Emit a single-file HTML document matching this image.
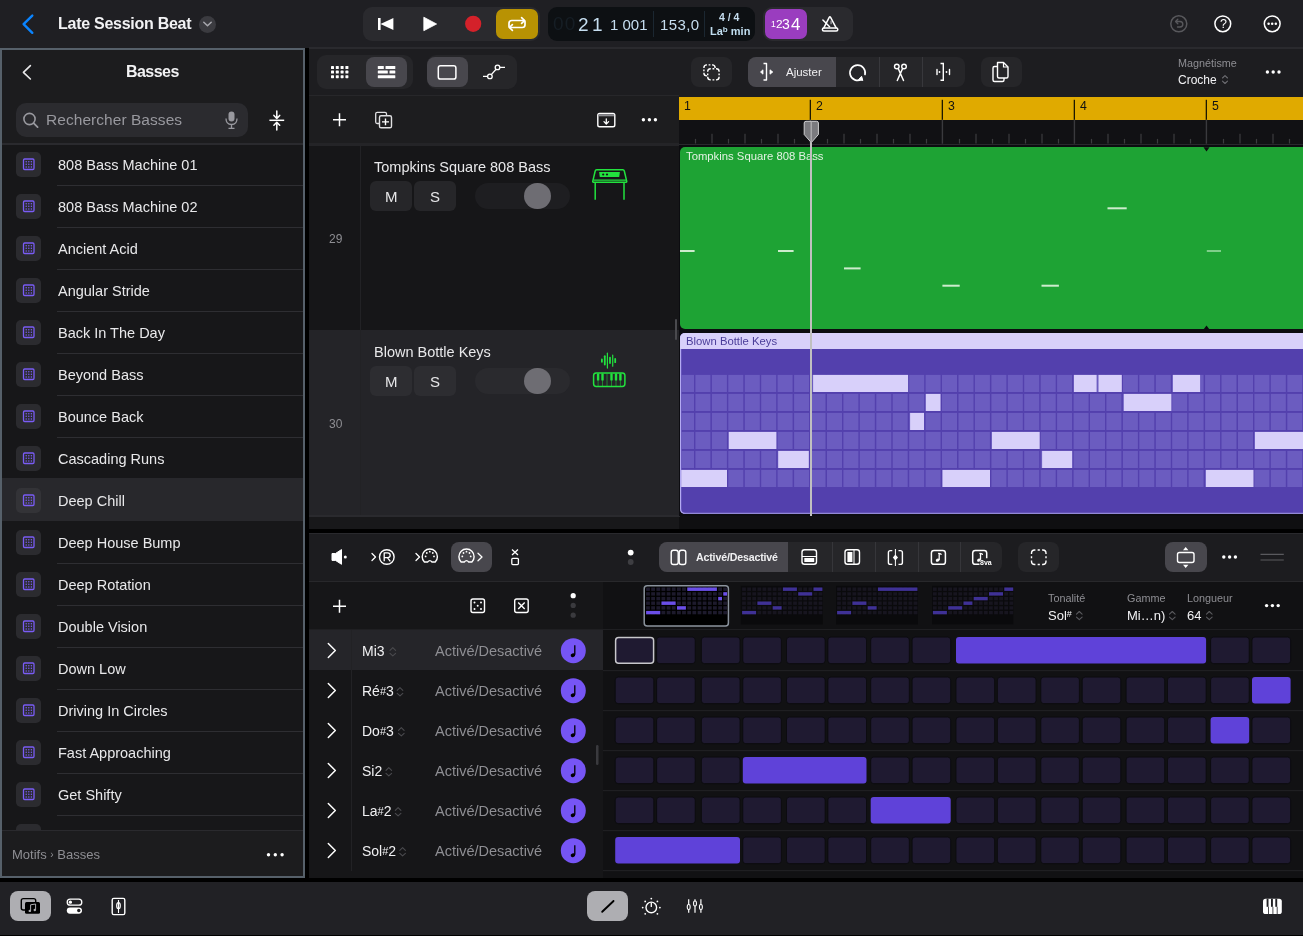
<!DOCTYPE html>
<html><head><meta charset="utf-8">
<style>
*{margin:0;padding:0;box-sizing:border-box}
html,body{width:1303px;height:936px;overflow:hidden;background:#000;font-family:"Liberation Sans",sans-serif;color:#fff}
.a{position:absolute}
svg{position:absolute;overflow:visible}
.t{position:absolute;white-space:nowrap;line-height:1;will-change:transform}
</style></head><body>
<!-- TOP BAR -->
<div class="a" style="left:0;top:0;width:1303px;height:48px;background:#1f1f23"></div>

<!-- back chevron -->
<svg style="left:0;top:0" width="60" height="48"><path d="M32.3 15.6 L23.6 24.2 L32.3 32.8" fill="none" stroke="#0a84ff" stroke-width="2.4" stroke-linecap="round" stroke-linejoin="round"/></svg>
<div class="t" style="left:58px;top:16px;font-size:16px;font-weight:700;color:#f2f2f4;letter-spacing:-0.27px">Late Session Beat</div>
<div class="a" style="left:199px;top:15.5px;width:17px;height:17px;border-radius:50%;background:#3b3b40"></div>
<svg style="left:0;top:0" width="230" height="48"><path d="M203.8 22.2 L207.5 25.8 L211.2 22.2" fill="none" stroke="#a8a8ae" stroke-width="1.5" stroke-linecap="round" stroke-linejoin="round"/></svg>
<!-- transport group -->
<div class="a" style="left:363px;top:7px;width:177px;height:34px;border-radius:9px;background:#2a2a2e"></div>
<svg style="left:0;top:0" width="560" height="48">
 <rect x="378" y="18" width="2.6" height="12" fill="#fff"/>
 <path d="M393.4 18 L393.4 30 L380.5 24 Z" fill="#fff"/>
 <path d="M423.8 17.2 L423.8 30.7 L436.6 24 Z" fill="#fff" stroke="#fff" stroke-width="0.8" stroke-linejoin="round"/>
 <circle cx="473.2" cy="23.8" r="8.1" fill="#d4212a"/>
</svg>
<div class="a" style="left:496px;top:8.5px;width:42px;height:30.5px;border-radius:7px;background:#b89203"></div>
<svg style="left:0;top:0" width="560" height="48">
 <path d="M509 26.5 V23.2 Q509 20.5 511.8 20.5 H524.5" fill="none" stroke="#fff" stroke-width="1.7" stroke-linecap="round"/>
 <path d="M521.6 17.6 L524.6 20.5 L521.6 23.4" fill="none" stroke="#fff" stroke-width="1.7" stroke-linecap="round" stroke-linejoin="round"/>
 <path d="M525 21.5 V24.8 Q525 27.5 522.2 27.5 H509.5" fill="none" stroke="#fff" stroke-width="1.7" stroke-linecap="round"/>
 <path d="M512.4 24.6 L509.4 27.5 L512.4 30.4" fill="none" stroke="#fff" stroke-width="1.7" stroke-linecap="round" stroke-linejoin="round"/>
</svg>
<!-- LCD -->
<div class="a" style="left:548px;top:7px;width:207px;height:33.5px;border-radius:9px;background:#0d1013"></div>
<div class="t" style="left:552.5px;top:14.3px;font-size:19px;color:#161e25;letter-spacing:1.2px">00</div>
<div class="t" style="left:577.5px;top:14.5px;font-size:19px;color:#c6def0">2</div>
<div class="t" style="left:592px;top:14.5px;font-size:19px;color:#c6def0">1</div>
<div class="t" style="left:610px;top:16.8px;font-size:15px;color:#c6def0">1 001</div>
<div class="a" style="left:653px;top:11px;width:1px;height:26px;background:#1b2731"></div>
<div class="t" style="left:659.5px;top:16.8px;font-size:15px;color:#c6def0;letter-spacing:0.4px">153,0</div>
<div class="a" style="left:703.8px;top:11px;width:1.2px;height:26px;background:#1b2731"></div>
<div class="t" style="left:718.5px;top:12.2px;font-size:10.5px;font-weight:700;color:#c6def0">4 / 4</div>
<div class="t" style="left:709.5px;top:25.9px;font-size:11px;font-weight:700;color:#c0def0">La<span style="font-size:8px;vertical-align:3px">b</span> min</div>
<!-- count-in group -->
<div class="a" style="left:763px;top:7px;width:90px;height:34px;border-radius:9px;background:#2a2a2e"></div>
<div class="a" style="left:765px;top:9px;width:42px;height:30px;border-radius:7px;background:#9a3dbf"></div>
<div class="t" style="left:771.3px;top:20px;font-size:8.6px;color:#fff">1</div><div class="t" style="left:775.6px;top:19.3px;font-size:11.8px;color:#fff">2</div><div class="t" style="left:782.2px;top:17px;font-size:14px;color:#fff">3</div><div class="t" style="left:790.8px;top:16.7px;font-size:16.9px;color:#fff">4</div>
<svg style="left:0;top:0" width="900" height="48">
 <path d="M823.6 28.3 L829.2 17.4 Q829.9 16.2 830.6 17.4 L836.4 28.3" fill="none" stroke="#fff" stroke-width="1.5" stroke-linejoin="round"/>
 <rect x="822.4" y="28.1" width="15.4" height="3" rx="1.5" fill="none" stroke="#fff" stroke-width="1.5"/>
 <path d="M822.9 20 L829.6 26.7" stroke="#fff" stroke-width="1.5" stroke-linecap="round"/>
 <rect x="830.4" y="20.6" width="1.4" height="3.6" fill="#9a9a9e"/>
</svg>
<!-- right icons -->
<svg style="left:0;top:0" width="1303" height="48">
 <circle cx="1178.8" cy="23.8" r="8" fill="none" stroke="#58585c" stroke-width="1.5"/>
 <path d="M1176 21.5 H1180 Q1182.8 21.5 1182.8 24.3 Q1182.8 27 1180 27 H1177.5" fill="none" stroke="#58585c" stroke-width="1.4" stroke-linecap="round"/>
 <path d="M1177.8 19.3 L1175.6 21.5 L1177.8 23.7" fill="none" stroke="#58585c" stroke-width="1.4" stroke-linecap="round" stroke-linejoin="round"/>
 <circle cx="1222.8" cy="23.8" r="7.9" fill="none" stroke="#fff" stroke-width="1.5"/>
 <circle cx="1272.2" cy="23.8" r="7.9" fill="none" stroke="#fff" stroke-width="1.5"/>
 <circle cx="1268.6" cy="23.8" r="1.25" fill="#fff"/><circle cx="1272.2" cy="23.8" r="1.25" fill="#fff"/><circle cx="1275.8" cy="23.8" r="1.25" fill="#fff"/>
</svg>
<div class="t" style="left:1219.5px;top:17.6px;font-size:12.5px;color:#fff">?</div>

<!-- LEFT PANEL -->
<div class="a" id="lp" style="left:0;top:48px;width:305px;height:830.3px;background:#1c1c1e;border:2px solid #56606a"></div>
<!-- left panel content -->
<svg style="left:0;top:0" width="305" height="100"><path d="M30.4 65.6 L23.4 72.3 L30.4 79" fill="none" stroke="#e8e8ea" stroke-width="1.6" stroke-linecap="round" stroke-linejoin="round"/></svg>
<div class="t" style="left:126.3px;top:64px;font-size:16px;font-weight:700;color:#f2f2f4;letter-spacing:-0.55px">Basses</div>
<div class="a" style="left:15.5px;top:103px;width:232.5px;height:34px;border-radius:10px;background:#2b2b2f"></div>
<svg style="left:0;top:0" width="305" height="145"><circle cx="29.5" cy="119" r="5.6" fill="none" stroke="#98989e" stroke-width="1.6"/><path d="M33.6 123.1 L37.6 127.1" stroke="#98989e" stroke-width="1.8" stroke-linecap="round"/><rect x="228.5" y="111.5" width="6" height="10" rx="3" fill="#98989e"/><path d="M226 118.5 Q226 124.5 231.5 124.5 Q237 124.5 237 118.5" fill="none" stroke="#98989e" stroke-width="1.3"/><path d="M231.5 124.5 V128 M228.5 128.3 H234.5" stroke="#98989e" stroke-width="1.3"/><path d="M269.4 120.3 H284.2" stroke="#fff" stroke-width="1.5"/><path d="M276.8 111 V118.2 M273.9 115.4 L276.8 118.4 L279.7 115.4" fill="none" stroke="#fff" stroke-width="1.5" stroke-linecap="round" stroke-linejoin="round"/><path d="M276.8 130 V122.5 M273.9 125.3 L276.8 122.3 L279.7 125.3" fill="none" stroke="#fff" stroke-width="1.5" stroke-linecap="round" stroke-linejoin="round"/></svg>
<div class="t" style="left:45.8px;top:112.4px;font-size:15.5px;color:#98989e;letter-spacing:0.05px">Rechercher Basses</div>
<div class="a" style="left:2px;top:145px;width:301px;height:685px;background:#171719"></div><div class="a" style="left:2px;top:143px;width:301px;height:2px;background:#2a2a2e"></div>
<div class="a" style="left:16px;top:152px;width:25px;height:25px;border-radius:5px;background:#2b2b2f"></div>
<div class="t" style="left:57.5px;top:157.7px;font-size:14.5px;color:#e8e8ea">808 Bass Machine 01</div>
<div class="a" style="left:57px;top:185px;width:246px;height:1px;background:#2e2e32"></div>
<div class="a" style="left:16px;top:194px;width:25px;height:25px;border-radius:5px;background:#2b2b2f"></div>
<div class="t" style="left:57.5px;top:199.7px;font-size:14.5px;color:#e8e8ea">808 Bass Machine 02</div>
<div class="a" style="left:57px;top:227px;width:246px;height:1px;background:#2e2e32"></div>
<div class="a" style="left:16px;top:236px;width:25px;height:25px;border-radius:5px;background:#2b2b2f"></div>
<div class="t" style="left:57.5px;top:241.7px;font-size:14.5px;color:#e8e8ea">Ancient Acid</div>
<div class="a" style="left:57px;top:269px;width:246px;height:1px;background:#2e2e32"></div>
<div class="a" style="left:16px;top:278px;width:25px;height:25px;border-radius:5px;background:#2b2b2f"></div>
<div class="t" style="left:57.5px;top:283.7px;font-size:14.5px;color:#e8e8ea">Angular Stride</div>
<div class="a" style="left:57px;top:311px;width:246px;height:1px;background:#2e2e32"></div>
<div class="a" style="left:16px;top:320px;width:25px;height:25px;border-radius:5px;background:#2b2b2f"></div>
<div class="t" style="left:57.5px;top:325.7px;font-size:14.5px;color:#e8e8ea">Back In The Day</div>
<div class="a" style="left:57px;top:353px;width:246px;height:1px;background:#2e2e32"></div>
<div class="a" style="left:16px;top:362px;width:25px;height:25px;border-radius:5px;background:#2b2b2f"></div>
<div class="t" style="left:57.5px;top:367.7px;font-size:14.5px;color:#e8e8ea">Beyond Bass</div>
<div class="a" style="left:57px;top:395px;width:246px;height:1px;background:#2e2e32"></div>
<div class="a" style="left:16px;top:404px;width:25px;height:25px;border-radius:5px;background:#2b2b2f"></div>
<div class="t" style="left:57.5px;top:409.7px;font-size:14.5px;color:#e8e8ea">Bounce Back</div>
<div class="a" style="left:57px;top:437px;width:246px;height:1px;background:#2e2e32"></div>
<div class="a" style="left:16px;top:446px;width:25px;height:25px;border-radius:5px;background:#2b2b2f"></div>
<div class="t" style="left:57.5px;top:451.7px;font-size:14.5px;color:#e8e8ea">Cascading Runs</div>
<div class="a" style="left:2px;top:478px;width:301px;height:43px;background:#28282c"></div>
<div class="a" style="left:16px;top:488px;width:25px;height:25px;border-radius:5px;background:#333337"></div>
<div class="t" style="left:57.5px;top:493.7px;font-size:14.5px;color:#e8e8ea">Deep Chill</div>
<div class="a" style="left:16px;top:530px;width:25px;height:25px;border-radius:5px;background:#2b2b2f"></div>
<div class="t" style="left:57.5px;top:535.7px;font-size:14.5px;color:#e8e8ea">Deep House Bump</div>
<div class="a" style="left:57px;top:563px;width:246px;height:1px;background:#2e2e32"></div>
<div class="a" style="left:16px;top:572px;width:25px;height:25px;border-radius:5px;background:#2b2b2f"></div>
<div class="t" style="left:57.5px;top:577.7px;font-size:14.5px;color:#e8e8ea">Deep Rotation</div>
<div class="a" style="left:57px;top:605px;width:246px;height:1px;background:#2e2e32"></div>
<div class="a" style="left:16px;top:614px;width:25px;height:25px;border-radius:5px;background:#2b2b2f"></div>
<div class="t" style="left:57.5px;top:619.7px;font-size:14.5px;color:#e8e8ea">Double Vision</div>
<div class="a" style="left:57px;top:647px;width:246px;height:1px;background:#2e2e32"></div>
<div class="a" style="left:16px;top:656px;width:25px;height:25px;border-radius:5px;background:#2b2b2f"></div>
<div class="t" style="left:57.5px;top:661.7px;font-size:14.5px;color:#e8e8ea">Down Low</div>
<div class="a" style="left:57px;top:689px;width:246px;height:1px;background:#2e2e32"></div>
<div class="a" style="left:16px;top:698px;width:25px;height:25px;border-radius:5px;background:#2b2b2f"></div>
<div class="t" style="left:57.5px;top:703.7px;font-size:14.5px;color:#e8e8ea">Driving In Circles</div>
<div class="a" style="left:57px;top:731px;width:246px;height:1px;background:#2e2e32"></div>
<div class="a" style="left:16px;top:740px;width:25px;height:25px;border-radius:5px;background:#2b2b2f"></div>
<div class="t" style="left:57.5px;top:745.7px;font-size:14.5px;color:#e8e8ea">Fast Approaching</div>
<div class="a" style="left:57px;top:773px;width:246px;height:1px;background:#2e2e32"></div>
<div class="a" style="left:16px;top:782px;width:25px;height:25px;border-radius:5px;background:#2b2b2f"></div>
<div class="t" style="left:57.5px;top:787.7px;font-size:14.5px;color:#e8e8ea">Get Shifty</div>
<div class="a" style="left:57px;top:815px;width:246px;height:1px;background:#2e2e32"></div>
<div class="a" style="left:16px;top:824px;width:25px;height:25px;border-radius:5px;background:#2b2b2f"></div>
<svg style="left:0;top:0" width="305" height="880">
<rect x="23.5" y="159.0" width="10.5" height="10.5" rx="1.2" fill="none" stroke="#7a5cf5" stroke-width="1.3"/><circle cx="26.2" cy="161.7" r="0.75" fill="#7a5cf5"/><circle cx="26.2" cy="164.29999999999998" r="0.75" fill="#7a5cf5"/><circle cx="26.2" cy="166.89999999999998" r="0.75" fill="#7a5cf5"/><circle cx="28.8" cy="161.7" r="0.75" fill="#7a5cf5"/><circle cx="28.8" cy="164.29999999999998" r="0.75" fill="#7a5cf5"/><circle cx="28.8" cy="166.89999999999998" r="0.75" fill="#7a5cf5"/><circle cx="31.4" cy="161.7" r="0.75" fill="#7a5cf5"/><circle cx="31.4" cy="164.29999999999998" r="0.75" fill="#7a5cf5"/><circle cx="31.4" cy="166.89999999999998" r="0.75" fill="#7a5cf5"/>
<rect x="23.5" y="201.0" width="10.5" height="10.5" rx="1.2" fill="none" stroke="#7a5cf5" stroke-width="1.3"/><circle cx="26.2" cy="203.7" r="0.75" fill="#7a5cf5"/><circle cx="26.2" cy="206.29999999999998" r="0.75" fill="#7a5cf5"/><circle cx="26.2" cy="208.89999999999998" r="0.75" fill="#7a5cf5"/><circle cx="28.8" cy="203.7" r="0.75" fill="#7a5cf5"/><circle cx="28.8" cy="206.29999999999998" r="0.75" fill="#7a5cf5"/><circle cx="28.8" cy="208.89999999999998" r="0.75" fill="#7a5cf5"/><circle cx="31.4" cy="203.7" r="0.75" fill="#7a5cf5"/><circle cx="31.4" cy="206.29999999999998" r="0.75" fill="#7a5cf5"/><circle cx="31.4" cy="208.89999999999998" r="0.75" fill="#7a5cf5"/>
<rect x="23.5" y="243.0" width="10.5" height="10.5" rx="1.2" fill="none" stroke="#7a5cf5" stroke-width="1.3"/><circle cx="26.2" cy="245.7" r="0.75" fill="#7a5cf5"/><circle cx="26.2" cy="248.29999999999998" r="0.75" fill="#7a5cf5"/><circle cx="26.2" cy="250.89999999999998" r="0.75" fill="#7a5cf5"/><circle cx="28.8" cy="245.7" r="0.75" fill="#7a5cf5"/><circle cx="28.8" cy="248.29999999999998" r="0.75" fill="#7a5cf5"/><circle cx="28.8" cy="250.89999999999998" r="0.75" fill="#7a5cf5"/><circle cx="31.4" cy="245.7" r="0.75" fill="#7a5cf5"/><circle cx="31.4" cy="248.29999999999998" r="0.75" fill="#7a5cf5"/><circle cx="31.4" cy="250.89999999999998" r="0.75" fill="#7a5cf5"/>
<rect x="23.5" y="285.0" width="10.5" height="10.5" rx="1.2" fill="none" stroke="#7a5cf5" stroke-width="1.3"/><circle cx="26.2" cy="287.7" r="0.75" fill="#7a5cf5"/><circle cx="26.2" cy="290.3" r="0.75" fill="#7a5cf5"/><circle cx="26.2" cy="292.9" r="0.75" fill="#7a5cf5"/><circle cx="28.8" cy="287.7" r="0.75" fill="#7a5cf5"/><circle cx="28.8" cy="290.3" r="0.75" fill="#7a5cf5"/><circle cx="28.8" cy="292.9" r="0.75" fill="#7a5cf5"/><circle cx="31.4" cy="287.7" r="0.75" fill="#7a5cf5"/><circle cx="31.4" cy="290.3" r="0.75" fill="#7a5cf5"/><circle cx="31.4" cy="292.9" r="0.75" fill="#7a5cf5"/>
<rect x="23.5" y="327.0" width="10.5" height="10.5" rx="1.2" fill="none" stroke="#7a5cf5" stroke-width="1.3"/><circle cx="26.2" cy="329.7" r="0.75" fill="#7a5cf5"/><circle cx="26.2" cy="332.3" r="0.75" fill="#7a5cf5"/><circle cx="26.2" cy="334.9" r="0.75" fill="#7a5cf5"/><circle cx="28.8" cy="329.7" r="0.75" fill="#7a5cf5"/><circle cx="28.8" cy="332.3" r="0.75" fill="#7a5cf5"/><circle cx="28.8" cy="334.9" r="0.75" fill="#7a5cf5"/><circle cx="31.4" cy="329.7" r="0.75" fill="#7a5cf5"/><circle cx="31.4" cy="332.3" r="0.75" fill="#7a5cf5"/><circle cx="31.4" cy="334.9" r="0.75" fill="#7a5cf5"/>
<rect x="23.5" y="369.0" width="10.5" height="10.5" rx="1.2" fill="none" stroke="#7a5cf5" stroke-width="1.3"/><circle cx="26.2" cy="371.7" r="0.75" fill="#7a5cf5"/><circle cx="26.2" cy="374.3" r="0.75" fill="#7a5cf5"/><circle cx="26.2" cy="376.9" r="0.75" fill="#7a5cf5"/><circle cx="28.8" cy="371.7" r="0.75" fill="#7a5cf5"/><circle cx="28.8" cy="374.3" r="0.75" fill="#7a5cf5"/><circle cx="28.8" cy="376.9" r="0.75" fill="#7a5cf5"/><circle cx="31.4" cy="371.7" r="0.75" fill="#7a5cf5"/><circle cx="31.4" cy="374.3" r="0.75" fill="#7a5cf5"/><circle cx="31.4" cy="376.9" r="0.75" fill="#7a5cf5"/>
<rect x="23.5" y="411.0" width="10.5" height="10.5" rx="1.2" fill="none" stroke="#7a5cf5" stroke-width="1.3"/><circle cx="26.2" cy="413.7" r="0.75" fill="#7a5cf5"/><circle cx="26.2" cy="416.3" r="0.75" fill="#7a5cf5"/><circle cx="26.2" cy="418.9" r="0.75" fill="#7a5cf5"/><circle cx="28.8" cy="413.7" r="0.75" fill="#7a5cf5"/><circle cx="28.8" cy="416.3" r="0.75" fill="#7a5cf5"/><circle cx="28.8" cy="418.9" r="0.75" fill="#7a5cf5"/><circle cx="31.4" cy="413.7" r="0.75" fill="#7a5cf5"/><circle cx="31.4" cy="416.3" r="0.75" fill="#7a5cf5"/><circle cx="31.4" cy="418.9" r="0.75" fill="#7a5cf5"/>
<rect x="23.5" y="453.0" width="10.5" height="10.5" rx="1.2" fill="none" stroke="#7a5cf5" stroke-width="1.3"/><circle cx="26.2" cy="455.7" r="0.75" fill="#7a5cf5"/><circle cx="26.2" cy="458.3" r="0.75" fill="#7a5cf5"/><circle cx="26.2" cy="460.9" r="0.75" fill="#7a5cf5"/><circle cx="28.8" cy="455.7" r="0.75" fill="#7a5cf5"/><circle cx="28.8" cy="458.3" r="0.75" fill="#7a5cf5"/><circle cx="28.8" cy="460.9" r="0.75" fill="#7a5cf5"/><circle cx="31.4" cy="455.7" r="0.75" fill="#7a5cf5"/><circle cx="31.4" cy="458.3" r="0.75" fill="#7a5cf5"/><circle cx="31.4" cy="460.9" r="0.75" fill="#7a5cf5"/>
<rect x="23.5" y="495.0" width="10.5" height="10.5" rx="1.2" fill="none" stroke="#7a5cf5" stroke-width="1.3"/><circle cx="26.2" cy="497.7" r="0.75" fill="#7a5cf5"/><circle cx="26.2" cy="500.3" r="0.75" fill="#7a5cf5"/><circle cx="26.2" cy="502.9" r="0.75" fill="#7a5cf5"/><circle cx="28.8" cy="497.7" r="0.75" fill="#7a5cf5"/><circle cx="28.8" cy="500.3" r="0.75" fill="#7a5cf5"/><circle cx="28.8" cy="502.9" r="0.75" fill="#7a5cf5"/><circle cx="31.4" cy="497.7" r="0.75" fill="#7a5cf5"/><circle cx="31.4" cy="500.3" r="0.75" fill="#7a5cf5"/><circle cx="31.4" cy="502.9" r="0.75" fill="#7a5cf5"/>
<rect x="23.5" y="537.0" width="10.5" height="10.5" rx="1.2" fill="none" stroke="#7a5cf5" stroke-width="1.3"/><circle cx="26.2" cy="539.7" r="0.75" fill="#7a5cf5"/><circle cx="26.2" cy="542.3000000000001" r="0.75" fill="#7a5cf5"/><circle cx="26.2" cy="544.9000000000001" r="0.75" fill="#7a5cf5"/><circle cx="28.8" cy="539.7" r="0.75" fill="#7a5cf5"/><circle cx="28.8" cy="542.3000000000001" r="0.75" fill="#7a5cf5"/><circle cx="28.8" cy="544.9000000000001" r="0.75" fill="#7a5cf5"/><circle cx="31.4" cy="539.7" r="0.75" fill="#7a5cf5"/><circle cx="31.4" cy="542.3000000000001" r="0.75" fill="#7a5cf5"/><circle cx="31.4" cy="544.9000000000001" r="0.75" fill="#7a5cf5"/>
<rect x="23.5" y="579.0" width="10.5" height="10.5" rx="1.2" fill="none" stroke="#7a5cf5" stroke-width="1.3"/><circle cx="26.2" cy="581.7" r="0.75" fill="#7a5cf5"/><circle cx="26.2" cy="584.3000000000001" r="0.75" fill="#7a5cf5"/><circle cx="26.2" cy="586.9000000000001" r="0.75" fill="#7a5cf5"/><circle cx="28.8" cy="581.7" r="0.75" fill="#7a5cf5"/><circle cx="28.8" cy="584.3000000000001" r="0.75" fill="#7a5cf5"/><circle cx="28.8" cy="586.9000000000001" r="0.75" fill="#7a5cf5"/><circle cx="31.4" cy="581.7" r="0.75" fill="#7a5cf5"/><circle cx="31.4" cy="584.3000000000001" r="0.75" fill="#7a5cf5"/><circle cx="31.4" cy="586.9000000000001" r="0.75" fill="#7a5cf5"/>
<rect x="23.5" y="621.0" width="10.5" height="10.5" rx="1.2" fill="none" stroke="#7a5cf5" stroke-width="1.3"/><circle cx="26.2" cy="623.7" r="0.75" fill="#7a5cf5"/><circle cx="26.2" cy="626.3000000000001" r="0.75" fill="#7a5cf5"/><circle cx="26.2" cy="628.9000000000001" r="0.75" fill="#7a5cf5"/><circle cx="28.8" cy="623.7" r="0.75" fill="#7a5cf5"/><circle cx="28.8" cy="626.3000000000001" r="0.75" fill="#7a5cf5"/><circle cx="28.8" cy="628.9000000000001" r="0.75" fill="#7a5cf5"/><circle cx="31.4" cy="623.7" r="0.75" fill="#7a5cf5"/><circle cx="31.4" cy="626.3000000000001" r="0.75" fill="#7a5cf5"/><circle cx="31.4" cy="628.9000000000001" r="0.75" fill="#7a5cf5"/>
<rect x="23.5" y="663.0" width="10.5" height="10.5" rx="1.2" fill="none" stroke="#7a5cf5" stroke-width="1.3"/><circle cx="26.2" cy="665.7" r="0.75" fill="#7a5cf5"/><circle cx="26.2" cy="668.3000000000001" r="0.75" fill="#7a5cf5"/><circle cx="26.2" cy="670.9000000000001" r="0.75" fill="#7a5cf5"/><circle cx="28.8" cy="665.7" r="0.75" fill="#7a5cf5"/><circle cx="28.8" cy="668.3000000000001" r="0.75" fill="#7a5cf5"/><circle cx="28.8" cy="670.9000000000001" r="0.75" fill="#7a5cf5"/><circle cx="31.4" cy="665.7" r="0.75" fill="#7a5cf5"/><circle cx="31.4" cy="668.3000000000001" r="0.75" fill="#7a5cf5"/><circle cx="31.4" cy="670.9000000000001" r="0.75" fill="#7a5cf5"/>
<rect x="23.5" y="705.0" width="10.5" height="10.5" rx="1.2" fill="none" stroke="#7a5cf5" stroke-width="1.3"/><circle cx="26.2" cy="707.7" r="0.75" fill="#7a5cf5"/><circle cx="26.2" cy="710.3000000000001" r="0.75" fill="#7a5cf5"/><circle cx="26.2" cy="712.9000000000001" r="0.75" fill="#7a5cf5"/><circle cx="28.8" cy="707.7" r="0.75" fill="#7a5cf5"/><circle cx="28.8" cy="710.3000000000001" r="0.75" fill="#7a5cf5"/><circle cx="28.8" cy="712.9000000000001" r="0.75" fill="#7a5cf5"/><circle cx="31.4" cy="707.7" r="0.75" fill="#7a5cf5"/><circle cx="31.4" cy="710.3000000000001" r="0.75" fill="#7a5cf5"/><circle cx="31.4" cy="712.9000000000001" r="0.75" fill="#7a5cf5"/>
<rect x="23.5" y="747.0" width="10.5" height="10.5" rx="1.2" fill="none" stroke="#7a5cf5" stroke-width="1.3"/><circle cx="26.2" cy="749.7" r="0.75" fill="#7a5cf5"/><circle cx="26.2" cy="752.3000000000001" r="0.75" fill="#7a5cf5"/><circle cx="26.2" cy="754.9000000000001" r="0.75" fill="#7a5cf5"/><circle cx="28.8" cy="749.7" r="0.75" fill="#7a5cf5"/><circle cx="28.8" cy="752.3000000000001" r="0.75" fill="#7a5cf5"/><circle cx="28.8" cy="754.9000000000001" r="0.75" fill="#7a5cf5"/><circle cx="31.4" cy="749.7" r="0.75" fill="#7a5cf5"/><circle cx="31.4" cy="752.3000000000001" r="0.75" fill="#7a5cf5"/><circle cx="31.4" cy="754.9000000000001" r="0.75" fill="#7a5cf5"/>
<rect x="23.5" y="789.0" width="10.5" height="10.5" rx="1.2" fill="none" stroke="#7a5cf5" stroke-width="1.3"/><circle cx="26.2" cy="791.7" r="0.75" fill="#7a5cf5"/><circle cx="26.2" cy="794.3000000000001" r="0.75" fill="#7a5cf5"/><circle cx="26.2" cy="796.9000000000001" r="0.75" fill="#7a5cf5"/><circle cx="28.8" cy="791.7" r="0.75" fill="#7a5cf5"/><circle cx="28.8" cy="794.3000000000001" r="0.75" fill="#7a5cf5"/><circle cx="28.8" cy="796.9000000000001" r="0.75" fill="#7a5cf5"/><circle cx="31.4" cy="791.7" r="0.75" fill="#7a5cf5"/><circle cx="31.4" cy="794.3000000000001" r="0.75" fill="#7a5cf5"/><circle cx="31.4" cy="796.9000000000001" r="0.75" fill="#7a5cf5"/>
<rect x="23.5" y="831.0" width="10.5" height="10.5" rx="1.2" fill="none" stroke="#7a5cf5" stroke-width="1.3"/><circle cx="26.2" cy="833.7" r="0.75" fill="#7a5cf5"/><circle cx="26.2" cy="836.3000000000001" r="0.75" fill="#7a5cf5"/><circle cx="26.2" cy="838.9000000000001" r="0.75" fill="#7a5cf5"/><circle cx="28.8" cy="833.7" r="0.75" fill="#7a5cf5"/><circle cx="28.8" cy="836.3000000000001" r="0.75" fill="#7a5cf5"/><circle cx="28.8" cy="838.9000000000001" r="0.75" fill="#7a5cf5"/><circle cx="31.4" cy="833.7" r="0.75" fill="#7a5cf5"/><circle cx="31.4" cy="836.3000000000001" r="0.75" fill="#7a5cf5"/><circle cx="31.4" cy="838.9000000000001" r="0.75" fill="#7a5cf5"/>
</svg>
<div class="a" style="left:23.5px;top:829.6px;width:10.5px;height:1.4px;background:#7a5cf5"></div><div class="a" style="left:2px;top:830px;width:301px;height:46px;background:#1c1c1e;border-top:1px solid #2a2a2e"></div>
<div class="t" style="left:12px;top:848px;font-size:13px;color:#8e8e93">Motifs <span style="font-size:10px;vertical-align:1px">&#8250;</span> Basses</div>
<svg style="left:0;top:0" width="305" height="880"><circle cx="268.5" cy="854.7" r="1.7" fill="#fff"/><circle cx="275.3" cy="854.7" r="1.7" fill="#fff"/><circle cx="282.1" cy="854.7" r="1.7" fill="#fff"/></svg>
<!-- TRACKS AREA -->
<div class="a" style="left:309px;top:48px;width:994px;height:481px;background:#1d1d20"></div>
<!-- tracks toolbar -->
<div class="a" style="left:309px;top:47.2px;width:994px;height:1.6px;background:#2a2a2e"></div>
<div class="a" style="left:317px;top:55px;width:96px;height:34px;border-radius:9px;background:#262629"></div>
<div class="a" style="left:365.5px;top:57px;width:41.5px;height:30px;border-radius:8px;background:#48474d"></div>
<div class="a" style="left:426.5px;top:55px;width:90.5px;height:34px;border-radius:9px;background:#262629"></div>
<div class="a" style="left:427px;top:57px;width:41px;height:30px;border-radius:8px;background:#48474d"></div>
<svg style="left:0;top:0" width="1303" height="100">
<rect x="331.0" y="66.0" width="3" height="3" rx="0.6" fill="#fff"/>
<rect x="331.0" y="70.6" width="3" height="3" rx="0.6" fill="#fff"/>
<rect x="331.0" y="75.2" width="3" height="3" rx="0.6" fill="#fff"/>
<rect x="335.8" y="66.0" width="3" height="3" rx="0.6" fill="#fff"/>
<rect x="335.8" y="70.6" width="3" height="3" rx="0.6" fill="#fff"/>
<rect x="335.8" y="75.2" width="3" height="3" rx="0.6" fill="#fff"/>
<rect x="340.6" y="66.0" width="3" height="3" rx="0.6" fill="#fff"/>
<rect x="340.6" y="70.6" width="3" height="3" rx="0.6" fill="#fff"/>
<rect x="340.6" y="75.2" width="3" height="3" rx="0.6" fill="#fff"/>
<rect x="345.4" y="66.0" width="3" height="3" rx="0.6" fill="#fff"/>
<rect x="345.4" y="70.6" width="3" height="3" rx="0.6" fill="#fff"/>
<rect x="345.4" y="75.2" width="3" height="3" rx="0.6" fill="#fff"/>
<rect x="377.8" y="66" width="6" height="3" rx="0.5" fill="#fff"/><rect x="385.5" y="66" width="9.8" height="3" rx="0.5" fill="#fff"/>
<rect x="377.8" y="70.6" width="10" height="3" rx="0.5" fill="#fff"/><rect x="389.5" y="70.6" width="5.8" height="3" rx="0.5" fill="#fff"/>
<rect x="377.8" y="75.2" width="17.5" height="3" rx="0.5" fill="#fff"/>
<rect x="438.3" y="65.7" width="17.6" height="13.4" rx="2.2" fill="none" stroke="#fff" stroke-width="1.5"/>
<path d="M483 76.4 H487.6 M499.8 67.4 H505" stroke="#fff" stroke-width="1.3"/><path d="M491.3 74.6 L496.1 69.2" stroke="#fff" stroke-width="1.3"/><circle cx="489.9" cy="76.4" r="2.3" fill="none" stroke="#fff" stroke-width="1.3"/><circle cx="497.5" cy="67.4" r="2.3" fill="none" stroke="#fff" stroke-width="1.3"/>
</svg>
<div class="a" style="left:691px;top:57px;width:41px;height:30px;border-radius:8px;background:#262629"></div>
<div class="a" style="left:748px;top:57px;width:216.5px;height:30px;border-radius:8px;background:#262629"></div>
<div class="a" style="left:748px;top:57px;width:87.5px;height:30px;border-radius:8px 0 0 8px;background:#48474d"></div>
<div class="a" style="left:878.5px;top:57px;width:1px;height:30px;background:#38383c"></div>
<div class="a" style="left:922px;top:57px;width:1px;height:30px;background:#38383c"></div>
<div class="a" style="left:980.5px;top:57px;width:41px;height:30px;border-radius:8px;background:#262629"></div>
<div class="t" style="left:786px;top:66.5px;font-size:11.5px;color:#f0f0f2">Ajuster</div>
<svg style="left:0;top:0" width="1303" height="100">
<path d="M703.9 68.0 V67.7 A2.8 2.8 0 0 1 706.6999999999999 64.9 H706.9999999999999 M712.0000000000001 64.9 H712.3000000000001 A2.8 2.8 0 0 1 715.1 67.7 V68.0 M715.1 72.80000000000001 V73.10000000000001 A2.8 2.8 0 0 1 712.3000000000001 75.9 H712.0000000000001 M706.9999999999999 75.9 H706.6999999999999 A2.8 2.8 0 0 1 703.9 73.10000000000001 V72.80000000000001 M708.6 64.9 H710.4 M708.6 75.9 H710.4 M703.9 69.5 V71.30000000000001 M715.1 69.5 V71.30000000000001" fill="none" stroke="#fff" stroke-width="1.4"/><rect x="707.7" y="68.7" width="11.399999999999977" height="11.200000000000003" rx="2.8" fill="#262629"/><path d="M707.7 71.8 V71.5 A2.8 2.8 0 0 1 710.5 68.7 H710.8 M716.0000000000001 68.7 H716.3000000000001 A2.8 2.8 0 0 1 719.1 71.5 V71.8 M719.1 76.80000000000001 V77.10000000000001 A2.8 2.8 0 0 1 716.3000000000001 79.9 H716.0000000000001 M710.8 79.9 H710.5 A2.8 2.8 0 0 1 707.7 77.10000000000001 V76.80000000000001 M712.5000000000001 68.7 H714.3000000000001 M712.5000000000001 79.9 H714.3000000000001 M707.7 73.4 V75.20000000000002 M719.1 73.4 V75.20000000000002" fill="none" stroke="#fff" stroke-width="1.4"/>
<path d="M763.5 63.5 H766.5 V80 H763.5" fill="none" stroke="#fff" stroke-width="1.4" stroke-linejoin="round"/><path d="M763 69.8 L760.5 72 L763 74.2 Z M770 69.8 L772.8 72 L770 74.2 Z" fill="#fff" stroke="#fff" stroke-width="0.8"/>
<path d="M861.5 79.3 A7.6 7.6 0 1 1 865 74.5" fill="none" stroke="#fff" stroke-width="1.7" stroke-linecap="round"/><path d="M858.5 79.5 L862.8 80.5 L861.6 76.3 Z" fill="#fff" stroke="#fff" stroke-width="1"/>
<circle cx="896.8" cy="66.5" r="2.3" fill="none" stroke="#fff" stroke-width="1.4"/><circle cx="904" cy="66.5" r="2.3" fill="none" stroke="#fff" stroke-width="1.4"/><path d="M898.2 68.5 L903.5 80.5 M902.6 68.5 L897.3 80.5" stroke="#fff" stroke-width="1.5" stroke-linecap="round"/>
<path d="M940.5 63.5 H943.3 V80.3 H940.5" fill="none" stroke="#fff" stroke-width="1.4"/><path d="M937 69.5 V74.5 M949.5 69.5 V74.5" stroke="#fff" stroke-width="1.4" stroke-linecap="round"/><circle cx="939.5" cy="72" r="0.9" fill="#fff"/><circle cx="946.5" cy="72" r="0.9" fill="#fff"/>
<path d="M997 66.5 H994.5 Q993 66.5 993 68 V80 Q993 81.5 994.5 81.5 H1002.5 Q1004 81.5 1004 80 V78" fill="none" stroke="#fff" stroke-width="1.4"/><path d="M997.5 62.5 H1003.5 L1008 67 V76.5 Q1008 78 1006.5 78 H999 Q997.5 78 997.5 76.5 Z" fill="none" stroke="#fff" stroke-width="1.4" stroke-linejoin="round"/><path d="M1003.5 62.5 V67 H1008" fill="none" stroke="#fff" stroke-width="1.2"/>
<circle cx="1267.4" cy="72" r="1.7" fill="#fff"/><circle cx="1273.2" cy="72" r="1.7" fill="#fff"/><circle cx="1279" cy="72" r="1.7" fill="#fff"/>
<path d="M1222.5 78 L1225 75.7 L1227.5 78 M1222.5 81.2 L1225 83.5 L1227.5 81.2" fill="none" stroke="#6e6e73" stroke-width="1.1" stroke-linecap="round" stroke-linejoin="round"/>
</svg>
<div class="t" style="left:1177.5px;top:58.3px;font-size:10.8px;color:#8e8e93">Magnétisme</div>
<div class="t" style="left:1177.5px;top:73.6px;font-size:12px;color:#f2f2f4">Croche</div>
<div class="a" style="left:309px;top:96px;width:370px;height:47px;background:#1d1d1f"></div><div class="a" style="left:309px;top:95px;width:370px;height:1.3px;background:#27272a"></div>
<div class="a" style="left:309px;top:143px;width:370px;height:3px;background:#242427"></div>
<svg style="left:0;top:0" width="700" height="150">
<path d="M333 119.7 H346 M339.5 113.2 V126.2" stroke="#fff" stroke-width="1.5"/>
<path d="M379.5 123.5 H377.2 Q375.7 123.5 375.7 122 V113.8 Q375.7 112.3 377.2 112.3 H385 Q386.5 112.3 386.5 113.8 V115.8" fill="none" stroke="#e0e0e2" stroke-width="1.3"/><rect x="379.5" y="115.8" width="12" height="12" rx="1.6" fill="#1d1d1f" stroke="#e0e0e2" stroke-width="1.4"/><path d="M385.5 118.5 V125.3 M382 121.9 H389" stroke="#fff" stroke-width="1.4"/>
<rect x="597.8" y="113.5" width="17" height="13.3" rx="1.8" fill="none" stroke="#fff" stroke-width="1.4"/><rect x="598.5" y="114.3" width="15.6" height="2" fill="#8e8e93"/><path d="M606.3 118.8 V123.8 M604 121.6 L606.3 124 L608.6 121.6" fill="none" stroke="#fff" stroke-width="1.3" stroke-linecap="round" stroke-linejoin="round"/>
<circle cx="643.4" cy="119.7" r="1.7" fill="#fff"/><circle cx="649.4" cy="119.7" r="1.7" fill="#fff"/><circle cx="655.4" cy="119.7" r="1.7" fill="#fff"/>
</svg>
<div class="a" style="left:309px;top:146px;width:370px;height:184px;background:#161618"></div>
<div class="a" style="left:309px;top:330px;width:370px;height:186px;background:#242428"></div>
<div class="a" style="left:360px;top:146px;width:1px;height:370px;background:#222225"></div>
<div class="a" style="left:309px;top:515.3px;width:994px;height:14px;background:#18181a"></div><div class="a" style="left:679px;top:515.3px;width:624px;height:14px;background:#0f0f11"></div><div class="a" style="left:309px;top:515.3px;width:371px;height:1.6px;background:#2a2a2e"></div>
<div class="a" style="left:679px;top:143px;width:624px;height:373px;background:#0c0c10"></div>
<div class="a" style="left:674.5px;top:319px;width:2.7px;height:21px;border-radius:1.5px;background:#4a4a4e"></div>
<!-- ruler -->
<div class="a" style="left:679px;top:96.8px;width:624px;height:23px;background:#e0aa00"></div>
<div class="a" style="left:679px;top:119.7px;width:624px;height:24px;background:#111114"></div>
<div class="a" style="left:679px;top:143.5px;width:624px;height:1px;background:#29292d"></div>
<svg style="left:0;top:0" width="1303" height="520">
<rect x="694.9" y="138.9" width="1.2" height="4.6" fill="#3c3c40"/>
<rect x="711.4" y="133.8" width="1.2" height="9.7" fill="#3c3c40"/>
<rect x="727.9" y="138.9" width="1.2" height="4.6" fill="#3c3c40"/>
<rect x="744.4" y="133.8" width="1.2" height="9.7" fill="#3c3c40"/>
<rect x="760.9" y="138.9" width="1.2" height="4.6" fill="#3c3c40"/>
<rect x="777.4" y="133.8" width="1.2" height="9.7" fill="#3c3c40"/>
<rect x="793.9" y="138.9" width="1.2" height="4.6" fill="#3c3c40"/>
<rect x="826.9" y="138.9" width="1.2" height="4.6" fill="#3c3c40"/>
<rect x="843.4" y="133.8" width="1.2" height="9.7" fill="#3c3c40"/>
<rect x="859.9" y="138.9" width="1.2" height="4.6" fill="#3c3c40"/>
<rect x="876.4" y="133.8" width="1.2" height="9.7" fill="#3c3c40"/>
<rect x="892.9" y="138.9" width="1.2" height="4.6" fill="#3c3c40"/>
<rect x="909.4" y="133.8" width="1.2" height="9.7" fill="#3c3c40"/>
<rect x="925.9" y="138.9" width="1.2" height="4.6" fill="#3c3c40"/>
<rect x="809.7" y="99.8" width="1.3" height="20" fill="#1c1800"/>
<rect x="809.7" y="119.7" width="1.4" height="24" fill="#3a3a3e"/>
<rect x="958.9" y="138.9" width="1.2" height="4.6" fill="#3c3c40"/>
<rect x="975.4" y="133.8" width="1.2" height="9.7" fill="#3c3c40"/>
<rect x="991.9" y="138.9" width="1.2" height="4.6" fill="#3c3c40"/>
<rect x="1008.4" y="133.8" width="1.2" height="9.7" fill="#3c3c40"/>
<rect x="1024.9" y="138.9" width="1.2" height="4.6" fill="#3c3c40"/>
<rect x="1041.4" y="133.8" width="1.2" height="9.7" fill="#3c3c40"/>
<rect x="1057.9" y="138.9" width="1.2" height="4.6" fill="#3c3c40"/>
<rect x="941.7" y="99.8" width="1.3" height="20" fill="#1c1800"/>
<rect x="941.7" y="119.7" width="1.4" height="24" fill="#3a3a3e"/>
<rect x="1090.9" y="138.9" width="1.2" height="4.6" fill="#3c3c40"/>
<rect x="1107.4" y="133.8" width="1.2" height="9.7" fill="#3c3c40"/>
<rect x="1123.9" y="138.9" width="1.2" height="4.6" fill="#3c3c40"/>
<rect x="1140.4" y="133.8" width="1.2" height="9.7" fill="#3c3c40"/>
<rect x="1156.9" y="138.9" width="1.2" height="4.6" fill="#3c3c40"/>
<rect x="1173.4" y="133.8" width="1.2" height="9.7" fill="#3c3c40"/>
<rect x="1189.9" y="138.9" width="1.2" height="4.6" fill="#3c3c40"/>
<rect x="1073.7" y="99.8" width="1.3" height="20" fill="#1c1800"/>
<rect x="1073.7" y="119.7" width="1.4" height="24" fill="#3a3a3e"/>
<rect x="1222.9" y="138.9" width="1.2" height="4.6" fill="#3c3c40"/>
<rect x="1239.4" y="133.8" width="1.2" height="9.7" fill="#3c3c40"/>
<rect x="1255.9" y="138.9" width="1.2" height="4.6" fill="#3c3c40"/>
<rect x="1272.4" y="133.8" width="1.2" height="9.7" fill="#3c3c40"/>
<rect x="1288.9" y="138.9" width="1.2" height="4.6" fill="#3c3c40"/>
<rect x="1205.7" y="99.8" width="1.3" height="20" fill="#1c1800"/>
<rect x="1205.7" y="119.7" width="1.4" height="24" fill="#3a3a3e"/>
</svg>
<div class="t" style="left:684.2px;top:99.5px;font-size:12.3px;color:#111">1</div>
<div class="t" style="left:816.3px;top:99.5px;font-size:12.3px;color:#111">2</div>
<div class="t" style="left:948.3px;top:99.5px;font-size:12.3px;color:#111">3</div>
<div class="t" style="left:1080.3px;top:99.5px;font-size:12.3px;color:#111">4</div>
<div class="t" style="left:1212.3px;top:99.5px;font-size:12.3px;color:#111">5</div>
<div class="a" style="left:680px;top:147.2px;width:640px;height:182.3px;border-radius:5px;background:#1ea334"></div>
<div class="t" style="left:685.5px;top:151.2px;font-size:11.3px;color:#e2f2e2">Tompkins Square 808 Bass</div>
<svg style="left:0;top:0" width="1303" height="520">
<rect x="680" y="250" width="14.6" height="2" fill="#cdeccd"/>
<rect x="778" y="250" width="15.6" height="2" fill="#cdeccd"/>
<rect x="844" y="267.4" width="16.6" height="2" fill="#cdeccd"/>
<rect x="942.4" y="284.7" width="17.3" height="2" fill="#cdeccd"/>
<rect x="1041.5" y="284.7" width="17.4" height="2" fill="#cdeccd"/>
<rect x="1107.5" y="207.3" width="19.2" height="2" fill="#cdeccd"/>
<rect x="1206.8" y="250" width="14.2" height="2" fill="#7fcf8a"/>
<path d="M1203.5 147.2 L1206.5 151.5 L1209.5 147.2 Z" fill="#0c0c10"/><path d="M1203.5 329.5 L1206.5 325.5 L1209.5 329.5 Z" fill="#0c0c10"/>
</svg>
<div class="a" style="left:680px;top:332.6px;width:640px;height:181.5px;border-radius:5px;background:#5340ad;overflow:hidden;box-shadow:inset 1.2px 0 0 #b4aaf2, inset 0 -1.2px 0 #9288d6"><div class="a" style="left:0;top:0;width:640px;height:16.4px;background:#d8d0fa"></div></div>
<div class="t" style="left:685.5px;top:335.5px;font-size:11.3px;color:#4a3d99">Blown Bottle Keys</div>
<svg style="left:0;top:0" width="1303" height="520">
<rect x="681.2" y="374.9" width="12.8" height="17.1" fill="#6b5cc0"/><rect x="695.4" y="374.9" width="15.0" height="17.1" fill="#6b5cc0"/><rect x="711.9" y="374.9" width="15.0" height="17.1" fill="#6b5cc0"/><rect x="728.3" y="374.9" width="15.0" height="17.1" fill="#6b5cc0"/><rect x="744.8" y="374.9" width="15.0" height="17.1" fill="#6b5cc0"/><rect x="761.2" y="374.9" width="15.0" height="17.1" fill="#6b5cc0"/><rect x="777.6" y="374.9" width="15.0" height="17.1" fill="#6b5cc0"/><rect x="794.1" y="374.9" width="15.0" height="17.1" fill="#6b5cc0"/><rect x="810.5" y="374.9" width="15.0" height="17.1" fill="#6b5cc0"/><rect x="827.0" y="374.9" width="15.0" height="17.1" fill="#6b5cc0"/><rect x="843.4" y="374.9" width="15.0" height="17.1" fill="#6b5cc0"/><rect x="859.8" y="374.9" width="15.0" height="17.1" fill="#6b5cc0"/><rect x="876.3" y="374.9" width="15.0" height="17.1" fill="#6b5cc0"/><rect x="892.7" y="374.9" width="15.0" height="17.1" fill="#6b5cc0"/><rect x="909.2" y="374.9" width="15.0" height="17.1" fill="#6b5cc0"/><rect x="925.6" y="374.9" width="15.0" height="17.1" fill="#6b5cc0"/><rect x="942.0" y="374.9" width="15.0" height="17.1" fill="#6b5cc0"/><rect x="958.5" y="374.9" width="15.0" height="17.1" fill="#6b5cc0"/><rect x="974.9" y="374.9" width="15.0" height="17.1" fill="#6b5cc0"/><rect x="991.4" y="374.9" width="15.0" height="17.1" fill="#6b5cc0"/><rect x="1007.8" y="374.9" width="15.0" height="17.1" fill="#6b5cc0"/><rect x="1024.2" y="374.9" width="15.0" height="17.1" fill="#6b5cc0"/><rect x="1040.7" y="374.9" width="15.0" height="17.1" fill="#6b5cc0"/><rect x="1057.1" y="374.9" width="15.0" height="17.1" fill="#6b5cc0"/><rect x="1073.6" y="374.9" width="15.0" height="17.1" fill="#6b5cc0"/><rect x="1090.0" y="374.9" width="15.0" height="17.1" fill="#6b5cc0"/><rect x="1106.4" y="374.9" width="15.0" height="17.1" fill="#6b5cc0"/><rect x="1122.9" y="374.9" width="15.0" height="17.1" fill="#6b5cc0"/><rect x="1139.3" y="374.9" width="15.0" height="17.1" fill="#6b5cc0"/><rect x="1155.8" y="374.9" width="15.0" height="17.1" fill="#6b5cc0"/><rect x="1172.2" y="374.9" width="15.0" height="17.1" fill="#6b5cc0"/><rect x="1188.6" y="374.9" width="15.0" height="17.1" fill="#6b5cc0"/><rect x="1205.1" y="374.9" width="15.0" height="17.1" fill="#6b5cc0"/><rect x="1221.5" y="374.9" width="15.0" height="17.1" fill="#6b5cc0"/><rect x="1238.0" y="374.9" width="15.0" height="17.1" fill="#6b5cc0"/><rect x="1254.4" y="374.9" width="15.0" height="17.1" fill="#6b5cc0"/><rect x="1270.8" y="374.9" width="15.0" height="17.1" fill="#6b5cc0"/><rect x="1287.3" y="374.9" width="15.0" height="17.1" fill="#6b5cc0"/><rect x="681.2" y="393.9" width="12.8" height="17.1" fill="#6b5cc0"/><rect x="695.4" y="393.9" width="15.0" height="17.1" fill="#6b5cc0"/><rect x="711.9" y="393.9" width="15.0" height="17.1" fill="#6b5cc0"/><rect x="728.3" y="393.9" width="15.0" height="17.1" fill="#6b5cc0"/><rect x="744.8" y="393.9" width="15.0" height="17.1" fill="#6b5cc0"/><rect x="761.2" y="393.9" width="15.0" height="17.1" fill="#6b5cc0"/><rect x="777.6" y="393.9" width="15.0" height="17.1" fill="#6b5cc0"/><rect x="794.1" y="393.9" width="15.0" height="17.1" fill="#6b5cc0"/><rect x="810.5" y="393.9" width="15.0" height="17.1" fill="#6b5cc0"/><rect x="827.0" y="393.9" width="15.0" height="17.1" fill="#6b5cc0"/><rect x="843.4" y="393.9" width="15.0" height="17.1" fill="#6b5cc0"/><rect x="859.8" y="393.9" width="15.0" height="17.1" fill="#6b5cc0"/><rect x="876.3" y="393.9" width="15.0" height="17.1" fill="#6b5cc0"/><rect x="892.7" y="393.9" width="15.0" height="17.1" fill="#6b5cc0"/><rect x="909.2" y="393.9" width="15.0" height="17.1" fill="#6b5cc0"/><rect x="925.6" y="393.9" width="15.0" height="17.1" fill="#6b5cc0"/><rect x="942.0" y="393.9" width="15.0" height="17.1" fill="#6b5cc0"/><rect x="958.5" y="393.9" width="15.0" height="17.1" fill="#6b5cc0"/><rect x="974.9" y="393.9" width="15.0" height="17.1" fill="#6b5cc0"/><rect x="991.4" y="393.9" width="15.0" height="17.1" fill="#6b5cc0"/><rect x="1007.8" y="393.9" width="15.0" height="17.1" fill="#6b5cc0"/><rect x="1024.2" y="393.9" width="15.0" height="17.1" fill="#6b5cc0"/><rect x="1040.7" y="393.9" width="15.0" height="17.1" fill="#6b5cc0"/><rect x="1057.1" y="393.9" width="15.0" height="17.1" fill="#6b5cc0"/><rect x="1073.6" y="393.9" width="15.0" height="17.1" fill="#6b5cc0"/><rect x="1090.0" y="393.9" width="15.0" height="17.1" fill="#6b5cc0"/><rect x="1106.4" y="393.9" width="15.0" height="17.1" fill="#6b5cc0"/><rect x="1122.9" y="393.9" width="15.0" height="17.1" fill="#6b5cc0"/><rect x="1139.3" y="393.9" width="15.0" height="17.1" fill="#6b5cc0"/><rect x="1155.8" y="393.9" width="15.0" height="17.1" fill="#6b5cc0"/><rect x="1172.2" y="393.9" width="15.0" height="17.1" fill="#6b5cc0"/><rect x="1188.6" y="393.9" width="15.0" height="17.1" fill="#6b5cc0"/><rect x="1205.1" y="393.9" width="15.0" height="17.1" fill="#6b5cc0"/><rect x="1221.5" y="393.9" width="15.0" height="17.1" fill="#6b5cc0"/><rect x="1238.0" y="393.9" width="15.0" height="17.1" fill="#6b5cc0"/><rect x="1254.4" y="393.9" width="15.0" height="17.1" fill="#6b5cc0"/><rect x="1270.8" y="393.9" width="15.0" height="17.1" fill="#6b5cc0"/><rect x="1287.3" y="393.9" width="15.0" height="17.1" fill="#6b5cc0"/><rect x="681.2" y="412.9" width="12.8" height="17.1" fill="#6b5cc0"/><rect x="695.4" y="412.9" width="15.0" height="17.1" fill="#6b5cc0"/><rect x="711.9" y="412.9" width="15.0" height="17.1" fill="#6b5cc0"/><rect x="728.3" y="412.9" width="15.0" height="17.1" fill="#6b5cc0"/><rect x="744.8" y="412.9" width="15.0" height="17.1" fill="#6b5cc0"/><rect x="761.2" y="412.9" width="15.0" height="17.1" fill="#6b5cc0"/><rect x="777.6" y="412.9" width="15.0" height="17.1" fill="#6b5cc0"/><rect x="794.1" y="412.9" width="15.0" height="17.1" fill="#6b5cc0"/><rect x="810.5" y="412.9" width="15.0" height="17.1" fill="#6b5cc0"/><rect x="827.0" y="412.9" width="15.0" height="17.1" fill="#6b5cc0"/><rect x="843.4" y="412.9" width="15.0" height="17.1" fill="#6b5cc0"/><rect x="859.8" y="412.9" width="15.0" height="17.1" fill="#6b5cc0"/><rect x="876.3" y="412.9" width="15.0" height="17.1" fill="#6b5cc0"/><rect x="892.7" y="412.9" width="15.0" height="17.1" fill="#6b5cc0"/><rect x="909.2" y="412.9" width="15.0" height="17.1" fill="#6b5cc0"/><rect x="925.6" y="412.9" width="15.0" height="17.1" fill="#6b5cc0"/><rect x="942.0" y="412.9" width="15.0" height="17.1" fill="#6b5cc0"/><rect x="958.5" y="412.9" width="15.0" height="17.1" fill="#6b5cc0"/><rect x="974.9" y="412.9" width="15.0" height="17.1" fill="#6b5cc0"/><rect x="991.4" y="412.9" width="15.0" height="17.1" fill="#6b5cc0"/><rect x="1007.8" y="412.9" width="15.0" height="17.1" fill="#6b5cc0"/><rect x="1024.2" y="412.9" width="15.0" height="17.1" fill="#6b5cc0"/><rect x="1040.7" y="412.9" width="15.0" height="17.1" fill="#6b5cc0"/><rect x="1057.1" y="412.9" width="15.0" height="17.1" fill="#6b5cc0"/><rect x="1073.6" y="412.9" width="15.0" height="17.1" fill="#6b5cc0"/><rect x="1090.0" y="412.9" width="15.0" height="17.1" fill="#6b5cc0"/><rect x="1106.4" y="412.9" width="15.0" height="17.1" fill="#6b5cc0"/><rect x="1122.9" y="412.9" width="15.0" height="17.1" fill="#6b5cc0"/><rect x="1139.3" y="412.9" width="15.0" height="17.1" fill="#6b5cc0"/><rect x="1155.8" y="412.9" width="15.0" height="17.1" fill="#6b5cc0"/><rect x="1172.2" y="412.9" width="15.0" height="17.1" fill="#6b5cc0"/><rect x="1188.6" y="412.9" width="15.0" height="17.1" fill="#6b5cc0"/><rect x="1205.1" y="412.9" width="15.0" height="17.1" fill="#6b5cc0"/><rect x="1221.5" y="412.9" width="15.0" height="17.1" fill="#6b5cc0"/><rect x="1238.0" y="412.9" width="15.0" height="17.1" fill="#6b5cc0"/><rect x="1254.4" y="412.9" width="15.0" height="17.1" fill="#6b5cc0"/><rect x="1270.8" y="412.9" width="15.0" height="17.1" fill="#6b5cc0"/><rect x="1287.3" y="412.9" width="15.0" height="17.1" fill="#6b5cc0"/><rect x="681.2" y="431.9" width="12.8" height="17.1" fill="#6b5cc0"/><rect x="695.4" y="431.9" width="15.0" height="17.1" fill="#6b5cc0"/><rect x="711.9" y="431.9" width="15.0" height="17.1" fill="#6b5cc0"/><rect x="728.3" y="431.9" width="15.0" height="17.1" fill="#6b5cc0"/><rect x="744.8" y="431.9" width="15.0" height="17.1" fill="#6b5cc0"/><rect x="761.2" y="431.9" width="15.0" height="17.1" fill="#6b5cc0"/><rect x="777.6" y="431.9" width="15.0" height="17.1" fill="#6b5cc0"/><rect x="794.1" y="431.9" width="15.0" height="17.1" fill="#6b5cc0"/><rect x="810.5" y="431.9" width="15.0" height="17.1" fill="#6b5cc0"/><rect x="827.0" y="431.9" width="15.0" height="17.1" fill="#6b5cc0"/><rect x="843.4" y="431.9" width="15.0" height="17.1" fill="#6b5cc0"/><rect x="859.8" y="431.9" width="15.0" height="17.1" fill="#6b5cc0"/><rect x="876.3" y="431.9" width="15.0" height="17.1" fill="#6b5cc0"/><rect x="892.7" y="431.9" width="15.0" height="17.1" fill="#6b5cc0"/><rect x="909.2" y="431.9" width="15.0" height="17.1" fill="#6b5cc0"/><rect x="925.6" y="431.9" width="15.0" height="17.1" fill="#6b5cc0"/><rect x="942.0" y="431.9" width="15.0" height="17.1" fill="#6b5cc0"/><rect x="958.5" y="431.9" width="15.0" height="17.1" fill="#6b5cc0"/><rect x="974.9" y="431.9" width="15.0" height="17.1" fill="#6b5cc0"/><rect x="991.4" y="431.9" width="15.0" height="17.1" fill="#6b5cc0"/><rect x="1007.8" y="431.9" width="15.0" height="17.1" fill="#6b5cc0"/><rect x="1024.2" y="431.9" width="15.0" height="17.1" fill="#6b5cc0"/><rect x="1040.7" y="431.9" width="15.0" height="17.1" fill="#6b5cc0"/><rect x="1057.1" y="431.9" width="15.0" height="17.1" fill="#6b5cc0"/><rect x="1073.6" y="431.9" width="15.0" height="17.1" fill="#6b5cc0"/><rect x="1090.0" y="431.9" width="15.0" height="17.1" fill="#6b5cc0"/><rect x="1106.4" y="431.9" width="15.0" height="17.1" fill="#6b5cc0"/><rect x="1122.9" y="431.9" width="15.0" height="17.1" fill="#6b5cc0"/><rect x="1139.3" y="431.9" width="15.0" height="17.1" fill="#6b5cc0"/><rect x="1155.8" y="431.9" width="15.0" height="17.1" fill="#6b5cc0"/><rect x="1172.2" y="431.9" width="15.0" height="17.1" fill="#6b5cc0"/><rect x="1188.6" y="431.9" width="15.0" height="17.1" fill="#6b5cc0"/><rect x="1205.1" y="431.9" width="15.0" height="17.1" fill="#6b5cc0"/><rect x="1221.5" y="431.9" width="15.0" height="17.1" fill="#6b5cc0"/><rect x="1238.0" y="431.9" width="15.0" height="17.1" fill="#6b5cc0"/><rect x="1254.4" y="431.9" width="15.0" height="17.1" fill="#6b5cc0"/><rect x="1270.8" y="431.9" width="15.0" height="17.1" fill="#6b5cc0"/><rect x="1287.3" y="431.9" width="15.0" height="17.1" fill="#6b5cc0"/><rect x="681.2" y="450.9" width="12.8" height="17.1" fill="#6b5cc0"/><rect x="695.4" y="450.9" width="15.0" height="17.1" fill="#6b5cc0"/><rect x="711.9" y="450.9" width="15.0" height="17.1" fill="#6b5cc0"/><rect x="728.3" y="450.9" width="15.0" height="17.1" fill="#6b5cc0"/><rect x="744.8" y="450.9" width="15.0" height="17.1" fill="#6b5cc0"/><rect x="761.2" y="450.9" width="15.0" height="17.1" fill="#6b5cc0"/><rect x="777.6" y="450.9" width="15.0" height="17.1" fill="#6b5cc0"/><rect x="794.1" y="450.9" width="15.0" height="17.1" fill="#6b5cc0"/><rect x="810.5" y="450.9" width="15.0" height="17.1" fill="#6b5cc0"/><rect x="827.0" y="450.9" width="15.0" height="17.1" fill="#6b5cc0"/><rect x="843.4" y="450.9" width="15.0" height="17.1" fill="#6b5cc0"/><rect x="859.8" y="450.9" width="15.0" height="17.1" fill="#6b5cc0"/><rect x="876.3" y="450.9" width="15.0" height="17.1" fill="#6b5cc0"/><rect x="892.7" y="450.9" width="15.0" height="17.1" fill="#6b5cc0"/><rect x="909.2" y="450.9" width="15.0" height="17.1" fill="#6b5cc0"/><rect x="925.6" y="450.9" width="15.0" height="17.1" fill="#6b5cc0"/><rect x="942.0" y="450.9" width="15.0" height="17.1" fill="#6b5cc0"/><rect x="958.5" y="450.9" width="15.0" height="17.1" fill="#6b5cc0"/><rect x="974.9" y="450.9" width="15.0" height="17.1" fill="#6b5cc0"/><rect x="991.4" y="450.9" width="15.0" height="17.1" fill="#6b5cc0"/><rect x="1007.8" y="450.9" width="15.0" height="17.1" fill="#6b5cc0"/><rect x="1024.2" y="450.9" width="15.0" height="17.1" fill="#6b5cc0"/><rect x="1040.7" y="450.9" width="15.0" height="17.1" fill="#6b5cc0"/><rect x="1057.1" y="450.9" width="15.0" height="17.1" fill="#6b5cc0"/><rect x="1073.6" y="450.9" width="15.0" height="17.1" fill="#6b5cc0"/><rect x="1090.0" y="450.9" width="15.0" height="17.1" fill="#6b5cc0"/><rect x="1106.4" y="450.9" width="15.0" height="17.1" fill="#6b5cc0"/><rect x="1122.9" y="450.9" width="15.0" height="17.1" fill="#6b5cc0"/><rect x="1139.3" y="450.9" width="15.0" height="17.1" fill="#6b5cc0"/><rect x="1155.8" y="450.9" width="15.0" height="17.1" fill="#6b5cc0"/><rect x="1172.2" y="450.9" width="15.0" height="17.1" fill="#6b5cc0"/><rect x="1188.6" y="450.9" width="15.0" height="17.1" fill="#6b5cc0"/><rect x="1205.1" y="450.9" width="15.0" height="17.1" fill="#6b5cc0"/><rect x="1221.5" y="450.9" width="15.0" height="17.1" fill="#6b5cc0"/><rect x="1238.0" y="450.9" width="15.0" height="17.1" fill="#6b5cc0"/><rect x="1254.4" y="450.9" width="15.0" height="17.1" fill="#6b5cc0"/><rect x="1270.8" y="450.9" width="15.0" height="17.1" fill="#6b5cc0"/><rect x="1287.3" y="450.9" width="15.0" height="17.1" fill="#6b5cc0"/><rect x="681.2" y="469.9" width="12.8" height="17.1" fill="#6b5cc0"/><rect x="695.4" y="469.9" width="15.0" height="17.1" fill="#6b5cc0"/><rect x="711.9" y="469.9" width="15.0" height="17.1" fill="#6b5cc0"/><rect x="728.3" y="469.9" width="15.0" height="17.1" fill="#6b5cc0"/><rect x="744.8" y="469.9" width="15.0" height="17.1" fill="#6b5cc0"/><rect x="761.2" y="469.9" width="15.0" height="17.1" fill="#6b5cc0"/><rect x="777.6" y="469.9" width="15.0" height="17.1" fill="#6b5cc0"/><rect x="794.1" y="469.9" width="15.0" height="17.1" fill="#6b5cc0"/><rect x="810.5" y="469.9" width="15.0" height="17.1" fill="#6b5cc0"/><rect x="827.0" y="469.9" width="15.0" height="17.1" fill="#6b5cc0"/><rect x="843.4" y="469.9" width="15.0" height="17.1" fill="#6b5cc0"/><rect x="859.8" y="469.9" width="15.0" height="17.1" fill="#6b5cc0"/><rect x="876.3" y="469.9" width="15.0" height="17.1" fill="#6b5cc0"/><rect x="892.7" y="469.9" width="15.0" height="17.1" fill="#6b5cc0"/><rect x="909.2" y="469.9" width="15.0" height="17.1" fill="#6b5cc0"/><rect x="925.6" y="469.9" width="15.0" height="17.1" fill="#6b5cc0"/><rect x="942.0" y="469.9" width="15.0" height="17.1" fill="#6b5cc0"/><rect x="958.5" y="469.9" width="15.0" height="17.1" fill="#6b5cc0"/><rect x="974.9" y="469.9" width="15.0" height="17.1" fill="#6b5cc0"/><rect x="991.4" y="469.9" width="15.0" height="17.1" fill="#6b5cc0"/><rect x="1007.8" y="469.9" width="15.0" height="17.1" fill="#6b5cc0"/><rect x="1024.2" y="469.9" width="15.0" height="17.1" fill="#6b5cc0"/><rect x="1040.7" y="469.9" width="15.0" height="17.1" fill="#6b5cc0"/><rect x="1057.1" y="469.9" width="15.0" height="17.1" fill="#6b5cc0"/><rect x="1073.6" y="469.9" width="15.0" height="17.1" fill="#6b5cc0"/><rect x="1090.0" y="469.9" width="15.0" height="17.1" fill="#6b5cc0"/><rect x="1106.4" y="469.9" width="15.0" height="17.1" fill="#6b5cc0"/><rect x="1122.9" y="469.9" width="15.0" height="17.1" fill="#6b5cc0"/><rect x="1139.3" y="469.9" width="15.0" height="17.1" fill="#6b5cc0"/><rect x="1155.8" y="469.9" width="15.0" height="17.1" fill="#6b5cc0"/><rect x="1172.2" y="469.9" width="15.0" height="17.1" fill="#6b5cc0"/><rect x="1188.6" y="469.9" width="15.0" height="17.1" fill="#6b5cc0"/><rect x="1205.1" y="469.9" width="15.0" height="17.1" fill="#6b5cc0"/><rect x="1221.5" y="469.9" width="15.0" height="17.1" fill="#6b5cc0"/><rect x="1238.0" y="469.9" width="15.0" height="17.1" fill="#6b5cc0"/><rect x="1254.4" y="469.9" width="15.0" height="17.1" fill="#6b5cc0"/><rect x="1270.8" y="469.9" width="15.0" height="17.1" fill="#6b5cc0"/><rect x="1287.3" y="469.9" width="15.0" height="17.1" fill="#6b5cc0"/><rect x="813.1" y="374.9" width="95.0" height="17.1" fill="#d8d0fa"/><rect x="1073.9" y="374.9" width="22.7" height="17.1" fill="#d8d0fa"/><rect x="1098.5" y="374.9" width="23.3" height="17.1" fill="#d8d0fa"/><rect x="1172.9" y="374.9" width="27.2" height="17.1" fill="#d8d0fa"/><rect x="925.8" y="393.9" width="14.7" height="17.1" fill="#d8d0fa"/><rect x="1123.8" y="393.9" width="47.6" height="17.1" fill="#d8d0fa"/><rect x="910.1" y="412.9" width="13.9" height="17.1" fill="#d8d0fa"/><rect x="728.8" y="431.9" width="47.6" height="17.1" fill="#d8d0fa"/><rect x="991.9" y="431.9" width="47.8" height="17.1" fill="#d8d0fa"/><rect x="1254.9" y="431.9" width="55.1" height="17.1" fill="#d8d0fa"/><rect x="778.2" y="450.9" width="30.6" height="17.1" fill="#d8d0fa"/><rect x="1042.1" y="450.9" width="30.1" height="17.1" fill="#d8d0fa"/><rect x="681.2" y="469.9" width="45.8" height="17.1" fill="#d8d0fa"/><rect x="942.5" y="469.9" width="47.5" height="17.1" fill="#d8d0fa"/><rect x="1205.9" y="469.9" width="47.6" height="17.1" fill="#d8d0fa"/></svg>
<div class="a" style="left:810.3px;top:121px;width:1.5px;height:395px;background:#c0c0c0"></div>
<svg style="left:0;top:0" width="1303" height="520"><path d="M804.2 123 Q804.2 121.3 806 121.3 H816.6 Q818.4 121.3 818.4 123 V134.5 L811.3 142.6 L804.2 134.5 Z" fill="#7a7a7e" stroke="#d0d0d2" stroke-width="1"/><rect x="810.5" y="121.5" width="1.5" height="21" fill="#a8a8aa"/></svg>
<div class="t" style="left:374px;top:160.3px;font-size:14.5px;color:#e8e8ea">Tompkins Square 808 Bass</div>
<div class="a" style="left:370px;top:180.7px;width:41.6px;height:30px;border-radius:6px;background:#262629"></div>
<div class="a" style="left:414px;top:180.7px;width:41.6px;height:30px;border-radius:6px;background:#262629"></div>
<div class="t" style="left:384.5px;top:188.5px;font-size:15px;color:#e6e6e8">M</div>
<div class="t" style="left:430px;top:188.5px;font-size:15px;color:#e6e6e8">S</div>
<div class="a" style="left:475px;top:182.7px;width:95px;height:26.3px;border-radius:13px;background:#1e1e21"></div>
<div class="a" style="left:524px;top:182.5px;width:26.6px;height:26.6px;border-radius:50%;background:#6e6d73"></div>
<div class="t" style="left:328.5px;top:232.5px;font-size:12px;color:#8e8e93">29</div>
<div class="t" style="left:374px;top:345.3px;font-size:14.5px;color:#e8e8ea">Blown Bottle Keys</div>
<div class="a" style="left:370px;top:365.7px;width:41.6px;height:30px;border-radius:6px;background:#2d2d31"></div>
<div class="a" style="left:414px;top:365.7px;width:41.6px;height:30px;border-radius:6px;background:#2d2d31"></div>
<div class="t" style="left:384.5px;top:373.5px;font-size:15px;color:#e6e6e8">M</div>
<div class="t" style="left:430px;top:373.5px;font-size:15px;color:#e6e6e8">S</div>
<div class="a" style="left:475px;top:367.7px;width:95px;height:26.3px;border-radius:13px;background:#2a2a2e"></div>
<div class="a" style="left:524px;top:367.5px;width:26.6px;height:26.6px;border-radius:50%;background:#6e6d73"></div>
<div class="t" style="left:328.5px;top:417.5px;font-size:12px;color:#8e8e93">30</div>
<svg style="left:0;top:0" width="700" height="520">
<path d="M593.3 182.2 Q592.6 182.2 592.8 181.2 L595.2 171 Q595.5 169.8 596.7 169.8 H622.8 Q624 169.8 624.3 171 L626.7 181.2 Q626.9 182.2 626.2 182.2 Z" fill="none" stroke="#22e23e" stroke-width="1.5" stroke-linejoin="round"/><path d="M593.5 180.2 H626" stroke="#22e23e" stroke-width="1.2"/><path d="M595.2 182.5 V199.7 M624 182.5 V199.7" stroke="#22e23e" stroke-width="1.5"/><path d="M599.1 172 H619.9 L619.2 176.9 H599.8 Z" fill="#22e23e"/><circle cx="603.2" cy="174.5" r="1.1" fill="#161618"/><circle cx="607" cy="174.5" r="1.1" fill="#161618"/>
<rect x="593.6" y="372.9" width="31.3" height="13.5" rx="2.6" fill="none" stroke="#22e23e" stroke-width="1.5"/><path d="M598.1 373.5 V386" stroke="#22e23e" stroke-width="0.9" opacity="0.55"/><rect x="596.9" y="373.5" width="2.4" height="7" rx="0.6" fill="#22e23e"/><path d="M602.5 373.5 V386" stroke="#22e23e" stroke-width="0.9" opacity="0.55"/><rect x="601.3" y="373.5" width="2.4" height="7" rx="0.6" fill="#22e23e"/><path d="M607.0 373.5 V386" stroke="#22e23e" stroke-width="0.9" opacity="0.55"/><path d="M611.5 373.5 V386" stroke="#22e23e" stroke-width="0.9" opacity="0.55"/><rect x="610.3" y="373.5" width="2.4" height="7" rx="0.6" fill="#22e23e"/><path d="M616.0 373.5 V386" stroke="#22e23e" stroke-width="0.9" opacity="0.55"/><rect x="614.8" y="373.5" width="2.4" height="7" rx="0.6" fill="#22e23e"/><path d="M620.4 373.5 V386" stroke="#22e23e" stroke-width="0.9" opacity="0.55"/><rect x="619.2" y="373.5" width="2.4" height="7" rx="0.6" fill="#22e23e"/><rect x="601.00" y="358.5" width="1.8" height="4.2" rx="0.9" fill="#22e23e"/><rect x="603.90" y="355.3" width="1.8" height="10.2" rx="0.9" fill="#22e23e"/><rect x="606.80" y="352.6" width="1.2" height="16.1" rx="0.6" fill="#22e23e"/><rect x="609.10" y="356.7" width="1.8" height="7.3" rx="0.9" fill="#22e23e"/><rect x="612.10" y="354.4" width="1.2" height="12.4" rx="0.6" fill="#22e23e"/><rect x="614.30" y="358" width="1.8" height="5.1" rx="0.9" fill="#22e23e"/></svg>
<!-- EDITOR -->
<div class="a" style="left:309px;top:533px;width:994px;height:346px;background:#151517"></div>
<!-- editor toolbar -->
<div class="a" style="left:309px;top:529px;width:994px;height:4px;background:#000"></div>
<div class="a" style="left:309px;top:533px;width:994px;height:48px;background:#1c1c1f"></div><div class="a" style="left:309px;top:533px;width:994px;height:1px;background:#29292d"></div>
<div class="a" style="left:309px;top:581px;width:994px;height:1px;background:#28282b"></div>
<div class="a" style="left:450.5px;top:542px;width:41.5px;height:30px;border-radius:8px;background:#48474d"></div>
<div class="a" style="left:659.3px;top:541.6px;width:343px;height:30.3px;border-radius:8px;background:#262629"></div>
<div class="a" style="left:659.3px;top:541.6px;width:128.5px;height:30.3px;border-radius:8px 0 0 8px;background:#48474d"></div>
<div class="a" style="left:831.7px;top:541.6px;width:1px;height:30.3px;background:#36363a"></div>
<div class="a" style="left:874.7px;top:541.6px;width:1px;height:30.3px;background:#36363a"></div>
<div class="a" style="left:917.5px;top:541.6px;width:1px;height:30.3px;background:#36363a"></div>
<div class="a" style="left:959.7px;top:541.6px;width:1px;height:30.3px;background:#36363a"></div>
<div class="a" style="left:1018px;top:541.6px;width:41.4px;height:30.3px;border-radius:8px;background:#262629"></div>
<div class="a" style="left:1165px;top:541.6px;width:42.3px;height:30.3px;border-radius:8px;background:#48474d"></div>
<div class="t" style="left:696px;top:551.5px;font-size:10.6px;font-weight:700;color:#f0f0f2;letter-spacing:-0.15px">Activé/Desactivé</div>
<svg style="left:0;top:0" width="1303" height="640">
<path d="M332 553.5 H335.5 L341.5 549.6 V564.3 L335.5 560.4 H332 Z" fill="#fff" stroke="#fff" stroke-width="1" stroke-linejoin="round"/><circle cx="345.3" cy="557" r="1.5" fill="#fff"/>
<path d="M372 553.5 L375.5 557 L372 560.5" fill="none" stroke="#fff" stroke-width="1.3" stroke-linecap="round" stroke-linejoin="round"/><circle cx="386.8" cy="557" r="7.3" fill="none" stroke="#fff" stroke-width="1.4"/><path d="M384.2 561.3 V552.8 H387.6 Q390.2 552.8 390.2 555.2 Q390.2 557.6 387.6 557.6 H384.2 M387.4 557.6 L390.3 561.3" fill="none" stroke="#fff" stroke-width="1.3" stroke-linejoin="round"/>
<path d="M416 553.5 L419.5 557 L416 560.5" fill="none" stroke="#fff" stroke-width="1.3" stroke-linecap="round" stroke-linejoin="round"/>
<path d="M424.40000000000003 562.0 A7.6 7.6 0 1 1 435.2 562.0 L432.0 562.0 Q429.8 559.2 427.6 562.0 Z" fill="none" stroke="#fff" stroke-width="1.4" stroke-linejoin="round"/><circle cx="425.6" cy="556.4000000000001" r="0.9" fill="#fff"/><circle cx="426.8" cy="553.0" r="0.9" fill="#fff"/><circle cx="429.8" cy="551.7" r="0.9" fill="#fff"/><circle cx="432.8" cy="553.0" r="0.9" fill="#fff"/><circle cx="434.0" cy="556.4000000000001" r="0.9" fill="#fff"/>
<path d="M461.1 562.0 A7.6 7.6 0 1 1 471.9 562.0 L468.7 562.0 Q466.5 559.2 464.3 562.0 Z" fill="none" stroke="#fff" stroke-width="1.4" stroke-linejoin="round"/><circle cx="462.3" cy="556.4000000000001" r="0.9" fill="#fff"/><circle cx="463.5" cy="553.0" r="0.9" fill="#fff"/><circle cx="466.5" cy="551.7" r="0.9" fill="#fff"/><circle cx="469.5" cy="553.0" r="0.9" fill="#fff"/><circle cx="470.7" cy="556.4000000000001" r="0.9" fill="#fff"/>
<path d="M478 553.3 L482 557 L478 560.7" fill="none" stroke="#fff" stroke-width="1.3" stroke-linecap="round" stroke-linejoin="round"/>
<path d="M512 549.5 L518 555 M518 549.5 L512 555" stroke="#fff" stroke-width="1.3"/><rect x="511.8" y="558.3" width="6.6" height="6.3" rx="1" fill="none" stroke="#fff" stroke-width="1.3"/>
<circle cx="630.7" cy="552.6" r="2.9" fill="#fff"/><circle cx="630.7" cy="562" r="2.9" fill="#3e3e42"/>
<rect x="671.2" y="550.2" width="7" height="14.3" rx="2.2" fill="none" stroke="#fff" stroke-width="1.4"/><rect x="679.2" y="550.2" width="6.6" height="14.3" rx="2.2" fill="none" stroke="#fff" stroke-width="1.4"/>
<rect x="802" y="549.7" width="14.5" height="14.5" rx="2.5" fill="none" stroke="#fff" stroke-width="1.4"/><rect x="804.3" y="558" width="9.9" height="4" fill="#fff"/><path d="M802 556.5 H816.5" stroke="#fff" stroke-width="1"/>
<rect x="845" y="549.7" width="14.5" height="14.5" rx="2.5" fill="none" stroke="#fff" stroke-width="1.4"/><rect x="847.4" y="552" width="5" height="10" fill="#fff"/><path d="M854 550 V564" stroke="#fff" stroke-width="1"/>
<path d="M892.3 550.6 H890.4 Q888.4 550.6 888.4 552.6 V562.4 Q888.4 564.4 890.4 564.4 H892.3 M898.5 550.6 H900.4 Q902.4 550.6 902.4 552.6 V562.4 Q902.4 564.4 900.4 564.4 H898.5" fill="none" stroke="#fff" stroke-width="1.4"/><path d="M895.4 549 V566" stroke="#fff" stroke-width="1"/><path d="M895.4 554.6 L898 557.5 L895.4 560.4 L892.8 557.5 Z" fill="#fff"/>
<rect x="931.4" y="550.5" width="14" height="13.8" rx="2.6" fill="none" stroke="#fff" stroke-width="1.5"/><path d="M939.1999999999999 553.5999999999999 V560.0" stroke="#fff" stroke-width="1.3"/><path d="M938.6 553.3 Q940.1 553.3 941.1 554.1999999999999" fill="none" stroke="#fff" stroke-width="1.3" stroke-linecap="round"/><ellipse cx="937.6" cy="560.1999999999999" rx="1.9" ry="1.5" fill="#fff" transform="rotate(-25 937.6 560.1999999999999)"/>
<path d="M979.5 564.3 H975.3 Q972.7 564.3 972.7 561.7 V553.1 Q972.7 550.5 975.3 550.5 H984.1 Q986.7 550.5 986.7 553.1 V558.3" fill="none" stroke="#fff" stroke-width="1.5"/><path d="M980.5 553.5999999999999 V560.0" stroke="#fff" stroke-width="1.3"/><path d="M979.9000000000001 553.3 Q981.4000000000001 553.3 982.4000000000001 554.1999999999999" fill="none" stroke="#fff" stroke-width="1.3" stroke-linecap="round"/><ellipse cx="978.9000000000001" cy="560.1999999999999" rx="1.9" ry="1.5" fill="#fff" transform="rotate(-25 978.9000000000001 560.1999999999999)"/>
<path d="M1031.5 553.9000000000001 V553.2 A3.2 3.2 0 0 1 1034.7 550 H1035.4 M1042.1 550 H1042.8 A3.2 3.2 0 0 1 1046 553.2 V553.9000000000001 M1046 560.5999999999999 V561.3 A3.2 3.2 0 0 1 1042.8 564.5 H1042.1 M1035.4 564.5 H1034.7 A3.2 3.2 0 0 1 1031.5 561.3 V560.5999999999999 M1037.65 550 H1039.85 M1037.65 564.5 H1039.85 M1031.5 556.15 V558.35 M1046 556.15 V558.35" fill="none" stroke="#fff" stroke-width="1.4"/>
<rect x="1177.5" y="552.5" width="16.5" height="10" rx="2" fill="none" stroke="#fff" stroke-width="1.4"/><path d="M1183 550.3 L1185.7 547 L1188.4 550.3 Z M1183 564.7 L1185.7 568 L1188.4 564.7 Z" fill="#fff"/>
<circle cx="1223.8" cy="557" r="1.7" fill="#fff"/><circle cx="1229.6" cy="557" r="1.7" fill="#fff"/><circle cx="1235.4" cy="557" r="1.7" fill="#fff"/>
<path d="M1260.5 554.3 H1283.8 M1260.5 560 H1283.8" stroke="#5a5a5e" stroke-width="1.2"/>
</svg>
<div class="t" style="left:980px;top:559px;font-size:7px;font-weight:700;color:#fff;text-shadow:0 0 1px #262629,0 0 1px #262629">8va</div>
<div class="a" style="left:309px;top:582px;width:294px;height:48px;background:#161618"></div>
<div class="a" style="left:603px;top:582px;width:700px;height:48px;background:#111113"></div>
<svg style="left:0;top:0" width="1303" height="640">
<path d="M333 606.2 H346 M339.5 599.7 V612.7" stroke="#fff" stroke-width="1.5"/>
<rect x="471" y="599" width="13.5" height="13.5" rx="2" fill="none" stroke="#fff" stroke-width="1.4"/><circle cx="474.5" cy="602.5" r="1" fill="#fff"/><circle cx="481" cy="602.5" r="1" fill="#fff"/><circle cx="477.7" cy="605.7" r="1" fill="#fff"/><circle cx="474.5" cy="609" r="1" fill="#fff"/><circle cx="481" cy="609" r="1" fill="#fff"/>
<rect x="514.7" y="599" width="13.5" height="13.5" rx="2" fill="none" stroke="#fff" stroke-width="1.4"/><path d="M518.2 602.5 L524.7 609 M524.7 602.5 L518.2 609" stroke="#fff" stroke-width="1.4"/>
<circle cx="573.2" cy="595.7" r="2.6" fill="#fff"/><circle cx="573.2" cy="605.4" r="2.6" fill="#3a3a3e"/><circle cx="573.2" cy="615.2" r="2.6" fill="#3a3a3e"/>
<rect x="644.2" y="585.7" width="84.2" height="40.4" rx="3" fill="#000" stroke="#8a929c" stroke-width="1.5"/><rect x="646.1" y="587.5" width="3.8" height="3.4" fill="#1d1a2c"/><rect x="651.2" y="587.5" width="3.8" height="3.4" fill="#1d1a2c"/><rect x="656.4" y="587.5" width="3.8" height="3.4" fill="#1d1a2c"/><rect x="661.5" y="587.5" width="3.8" height="3.4" fill="#1d1a2c"/><rect x="666.7" y="587.5" width="3.8" height="3.4" fill="#1d1a2c"/><rect x="671.8" y="587.5" width="3.8" height="3.4" fill="#1d1a2c"/><rect x="677.0" y="587.5" width="3.8" height="3.4" fill="#1d1a2c"/><rect x="682.1" y="587.5" width="3.8" height="3.4" fill="#1d1a2c"/><rect x="687.3" y="587.5" width="3.8" height="3.4" fill="#1d1a2c"/><rect x="692.4" y="587.5" width="3.8" height="3.4" fill="#1d1a2c"/><rect x="697.6" y="587.5" width="3.8" height="3.4" fill="#1d1a2c"/><rect x="702.7" y="587.5" width="3.8" height="3.4" fill="#1d1a2c"/><rect x="707.9" y="587.5" width="3.8" height="3.4" fill="#1d1a2c"/><rect x="713.0" y="587.5" width="3.8" height="3.4" fill="#1d1a2c"/><rect x="718.2" y="587.5" width="3.8" height="3.4" fill="#1d1a2c"/><rect x="723.3" y="587.5" width="3.8" height="3.4" fill="#1d1a2c"/><rect x="646.1" y="592.2" width="3.8" height="3.4" fill="#1d1a2c"/><rect x="651.2" y="592.2" width="3.8" height="3.4" fill="#1d1a2c"/><rect x="656.4" y="592.2" width="3.8" height="3.4" fill="#1d1a2c"/><rect x="661.5" y="592.2" width="3.8" height="3.4" fill="#1d1a2c"/><rect x="666.7" y="592.2" width="3.8" height="3.4" fill="#1d1a2c"/><rect x="671.8" y="592.2" width="3.8" height="3.4" fill="#1d1a2c"/><rect x="677.0" y="592.2" width="3.8" height="3.4" fill="#1d1a2c"/><rect x="682.1" y="592.2" width="3.8" height="3.4" fill="#1d1a2c"/><rect x="687.3" y="592.2" width="3.8" height="3.4" fill="#1d1a2c"/><rect x="692.4" y="592.2" width="3.8" height="3.4" fill="#1d1a2c"/><rect x="697.6" y="592.2" width="3.8" height="3.4" fill="#1d1a2c"/><rect x="702.7" y="592.2" width="3.8" height="3.4" fill="#1d1a2c"/><rect x="707.9" y="592.2" width="3.8" height="3.4" fill="#1d1a2c"/><rect x="713.0" y="592.2" width="3.8" height="3.4" fill="#1d1a2c"/><rect x="718.2" y="592.2" width="3.8" height="3.4" fill="#1d1a2c"/><rect x="723.3" y="592.2" width="3.8" height="3.4" fill="#1d1a2c"/><rect x="646.1" y="596.9" width="3.8" height="3.4" fill="#1d1a2c"/><rect x="651.2" y="596.9" width="3.8" height="3.4" fill="#1d1a2c"/><rect x="656.4" y="596.9" width="3.8" height="3.4" fill="#1d1a2c"/><rect x="661.5" y="596.9" width="3.8" height="3.4" fill="#1d1a2c"/><rect x="666.7" y="596.9" width="3.8" height="3.4" fill="#1d1a2c"/><rect x="671.8" y="596.9" width="3.8" height="3.4" fill="#1d1a2c"/><rect x="677.0" y="596.9" width="3.8" height="3.4" fill="#1d1a2c"/><rect x="682.1" y="596.9" width="3.8" height="3.4" fill="#1d1a2c"/><rect x="687.3" y="596.9" width="3.8" height="3.4" fill="#1d1a2c"/><rect x="692.4" y="596.9" width="3.8" height="3.4" fill="#1d1a2c"/><rect x="697.6" y="596.9" width="3.8" height="3.4" fill="#1d1a2c"/><rect x="702.7" y="596.9" width="3.8" height="3.4" fill="#1d1a2c"/><rect x="707.9" y="596.9" width="3.8" height="3.4" fill="#1d1a2c"/><rect x="713.0" y="596.9" width="3.8" height="3.4" fill="#1d1a2c"/><rect x="718.2" y="596.9" width="3.8" height="3.4" fill="#1d1a2c"/><rect x="723.3" y="596.9" width="3.8" height="3.4" fill="#1d1a2c"/><rect x="646.1" y="601.5" width="3.8" height="3.4" fill="#1d1a2c"/><rect x="651.2" y="601.5" width="3.8" height="3.4" fill="#1d1a2c"/><rect x="656.4" y="601.5" width="3.8" height="3.4" fill="#1d1a2c"/><rect x="661.5" y="601.5" width="3.8" height="3.4" fill="#1d1a2c"/><rect x="666.7" y="601.5" width="3.8" height="3.4" fill="#1d1a2c"/><rect x="671.8" y="601.5" width="3.8" height="3.4" fill="#1d1a2c"/><rect x="677.0" y="601.5" width="3.8" height="3.4" fill="#1d1a2c"/><rect x="682.1" y="601.5" width="3.8" height="3.4" fill="#1d1a2c"/><rect x="687.3" y="601.5" width="3.8" height="3.4" fill="#1d1a2c"/><rect x="692.4" y="601.5" width="3.8" height="3.4" fill="#1d1a2c"/><rect x="697.6" y="601.5" width="3.8" height="3.4" fill="#1d1a2c"/><rect x="702.7" y="601.5" width="3.8" height="3.4" fill="#1d1a2c"/><rect x="707.9" y="601.5" width="3.8" height="3.4" fill="#1d1a2c"/><rect x="713.0" y="601.5" width="3.8" height="3.4" fill="#1d1a2c"/><rect x="718.2" y="601.5" width="3.8" height="3.4" fill="#1d1a2c"/><rect x="723.3" y="601.5" width="3.8" height="3.4" fill="#1d1a2c"/><rect x="646.1" y="606.2" width="3.8" height="3.4" fill="#1d1a2c"/><rect x="651.2" y="606.2" width="3.8" height="3.4" fill="#1d1a2c"/><rect x="656.4" y="606.2" width="3.8" height="3.4" fill="#1d1a2c"/><rect x="661.5" y="606.2" width="3.8" height="3.4" fill="#1d1a2c"/><rect x="666.7" y="606.2" width="3.8" height="3.4" fill="#1d1a2c"/><rect x="671.8" y="606.2" width="3.8" height="3.4" fill="#1d1a2c"/><rect x="677.0" y="606.2" width="3.8" height="3.4" fill="#1d1a2c"/><rect x="682.1" y="606.2" width="3.8" height="3.4" fill="#1d1a2c"/><rect x="687.3" y="606.2" width="3.8" height="3.4" fill="#1d1a2c"/><rect x="692.4" y="606.2" width="3.8" height="3.4" fill="#1d1a2c"/><rect x="697.6" y="606.2" width="3.8" height="3.4" fill="#1d1a2c"/><rect x="702.7" y="606.2" width="3.8" height="3.4" fill="#1d1a2c"/><rect x="707.9" y="606.2" width="3.8" height="3.4" fill="#1d1a2c"/><rect x="713.0" y="606.2" width="3.8" height="3.4" fill="#1d1a2c"/><rect x="718.2" y="606.2" width="3.8" height="3.4" fill="#1d1a2c"/><rect x="723.3" y="606.2" width="3.8" height="3.4" fill="#1d1a2c"/><rect x="646.1" y="610.9" width="3.8" height="3.4" fill="#1d1a2c"/><rect x="651.2" y="610.9" width="3.8" height="3.4" fill="#1d1a2c"/><rect x="656.4" y="610.9" width="3.8" height="3.4" fill="#1d1a2c"/><rect x="661.5" y="610.9" width="3.8" height="3.4" fill="#1d1a2c"/><rect x="666.7" y="610.9" width="3.8" height="3.4" fill="#1d1a2c"/><rect x="671.8" y="610.9" width="3.8" height="3.4" fill="#1d1a2c"/><rect x="677.0" y="610.9" width="3.8" height="3.4" fill="#1d1a2c"/><rect x="682.1" y="610.9" width="3.8" height="3.4" fill="#1d1a2c"/><rect x="687.3" y="610.9" width="3.8" height="3.4" fill="#1d1a2c"/><rect x="692.4" y="610.9" width="3.8" height="3.4" fill="#1d1a2c"/><rect x="697.6" y="610.9" width="3.8" height="3.4" fill="#1d1a2c"/><rect x="702.7" y="610.9" width="3.8" height="3.4" fill="#1d1a2c"/><rect x="707.9" y="610.9" width="3.8" height="3.4" fill="#1d1a2c"/><rect x="713.0" y="610.9" width="3.8" height="3.4" fill="#1d1a2c"/><rect x="718.2" y="610.9" width="3.8" height="3.4" fill="#1d1a2c"/><rect x="723.3" y="610.9" width="3.8" height="3.4" fill="#1d1a2c"/><rect x="687.3" y="587.5" width="29.6" height="3.4" fill="#6a4ee8"/><rect x="723.3" y="592.2" width="3.8" height="3.4" fill="#6a4ee8"/><rect x="718.2" y="596.9" width="3.8" height="3.4" fill="#6a4ee8"/><rect x="661.5" y="601.5" width="14.1" height="3.4" fill="#6a4ee8"/><rect x="677.0" y="606.2" width="8.9" height="3.4" fill="#6a4ee8"/><rect x="646.1" y="610.9" width="14.1" height="3.4" fill="#6a4ee8"/><rect x="740.8" y="585.8" width="82" height="38.7" fill="#0a0a0c"/><rect x="742.1" y="587.5" width="3.8" height="3.4" fill="#17151f"/><rect x="747.2" y="587.5" width="3.8" height="3.4" fill="#17151f"/><rect x="752.3" y="587.5" width="3.8" height="3.4" fill="#17151f"/><rect x="757.4" y="587.5" width="3.8" height="3.4" fill="#17151f"/><rect x="762.5" y="587.5" width="3.8" height="3.4" fill="#17151f"/><rect x="767.6" y="587.5" width="3.8" height="3.4" fill="#17151f"/><rect x="772.7" y="587.5" width="3.8" height="3.4" fill="#17151f"/><rect x="777.8" y="587.5" width="3.8" height="3.4" fill="#17151f"/><rect x="782.9" y="587.5" width="3.8" height="3.4" fill="#17151f"/><rect x="788.0" y="587.5" width="3.8" height="3.4" fill="#17151f"/><rect x="793.1" y="587.5" width="3.8" height="3.4" fill="#17151f"/><rect x="798.2" y="587.5" width="3.8" height="3.4" fill="#17151f"/><rect x="803.3" y="587.5" width="3.8" height="3.4" fill="#17151f"/><rect x="808.4" y="587.5" width="3.8" height="3.4" fill="#17151f"/><rect x="813.5" y="587.5" width="3.8" height="3.4" fill="#17151f"/><rect x="818.6" y="587.5" width="3.8" height="3.4" fill="#17151f"/><rect x="742.1" y="592.2" width="3.8" height="3.4" fill="#17151f"/><rect x="747.2" y="592.2" width="3.8" height="3.4" fill="#17151f"/><rect x="752.3" y="592.2" width="3.8" height="3.4" fill="#17151f"/><rect x="757.4" y="592.2" width="3.8" height="3.4" fill="#17151f"/><rect x="762.5" y="592.2" width="3.8" height="3.4" fill="#17151f"/><rect x="767.6" y="592.2" width="3.8" height="3.4" fill="#17151f"/><rect x="772.7" y="592.2" width="3.8" height="3.4" fill="#17151f"/><rect x="777.8" y="592.2" width="3.8" height="3.4" fill="#17151f"/><rect x="782.9" y="592.2" width="3.8" height="3.4" fill="#17151f"/><rect x="788.0" y="592.2" width="3.8" height="3.4" fill="#17151f"/><rect x="793.1" y="592.2" width="3.8" height="3.4" fill="#17151f"/><rect x="798.2" y="592.2" width="3.8" height="3.4" fill="#17151f"/><rect x="803.3" y="592.2" width="3.8" height="3.4" fill="#17151f"/><rect x="808.4" y="592.2" width="3.8" height="3.4" fill="#17151f"/><rect x="813.5" y="592.2" width="3.8" height="3.4" fill="#17151f"/><rect x="818.6" y="592.2" width="3.8" height="3.4" fill="#17151f"/><rect x="742.1" y="596.9" width="3.8" height="3.4" fill="#17151f"/><rect x="747.2" y="596.9" width="3.8" height="3.4" fill="#17151f"/><rect x="752.3" y="596.9" width="3.8" height="3.4" fill="#17151f"/><rect x="757.4" y="596.9" width="3.8" height="3.4" fill="#17151f"/><rect x="762.5" y="596.9" width="3.8" height="3.4" fill="#17151f"/><rect x="767.6" y="596.9" width="3.8" height="3.4" fill="#17151f"/><rect x="772.7" y="596.9" width="3.8" height="3.4" fill="#17151f"/><rect x="777.8" y="596.9" width="3.8" height="3.4" fill="#17151f"/><rect x="782.9" y="596.9" width="3.8" height="3.4" fill="#17151f"/><rect x="788.0" y="596.9" width="3.8" height="3.4" fill="#17151f"/><rect x="793.1" y="596.9" width="3.8" height="3.4" fill="#17151f"/><rect x="798.2" y="596.9" width="3.8" height="3.4" fill="#17151f"/><rect x="803.3" y="596.9" width="3.8" height="3.4" fill="#17151f"/><rect x="808.4" y="596.9" width="3.8" height="3.4" fill="#17151f"/><rect x="813.5" y="596.9" width="3.8" height="3.4" fill="#17151f"/><rect x="818.6" y="596.9" width="3.8" height="3.4" fill="#17151f"/><rect x="742.1" y="601.5" width="3.8" height="3.4" fill="#17151f"/><rect x="747.2" y="601.5" width="3.8" height="3.4" fill="#17151f"/><rect x="752.3" y="601.5" width="3.8" height="3.4" fill="#17151f"/><rect x="757.4" y="601.5" width="3.8" height="3.4" fill="#17151f"/><rect x="762.5" y="601.5" width="3.8" height="3.4" fill="#17151f"/><rect x="767.6" y="601.5" width="3.8" height="3.4" fill="#17151f"/><rect x="772.7" y="601.5" width="3.8" height="3.4" fill="#17151f"/><rect x="777.8" y="601.5" width="3.8" height="3.4" fill="#17151f"/><rect x="782.9" y="601.5" width="3.8" height="3.4" fill="#17151f"/><rect x="788.0" y="601.5" width="3.8" height="3.4" fill="#17151f"/><rect x="793.1" y="601.5" width="3.8" height="3.4" fill="#17151f"/><rect x="798.2" y="601.5" width="3.8" height="3.4" fill="#17151f"/><rect x="803.3" y="601.5" width="3.8" height="3.4" fill="#17151f"/><rect x="808.4" y="601.5" width="3.8" height="3.4" fill="#17151f"/><rect x="813.5" y="601.5" width="3.8" height="3.4" fill="#17151f"/><rect x="818.6" y="601.5" width="3.8" height="3.4" fill="#17151f"/><rect x="742.1" y="606.2" width="3.8" height="3.4" fill="#17151f"/><rect x="747.2" y="606.2" width="3.8" height="3.4" fill="#17151f"/><rect x="752.3" y="606.2" width="3.8" height="3.4" fill="#17151f"/><rect x="757.4" y="606.2" width="3.8" height="3.4" fill="#17151f"/><rect x="762.5" y="606.2" width="3.8" height="3.4" fill="#17151f"/><rect x="767.6" y="606.2" width="3.8" height="3.4" fill="#17151f"/><rect x="772.7" y="606.2" width="3.8" height="3.4" fill="#17151f"/><rect x="777.8" y="606.2" width="3.8" height="3.4" fill="#17151f"/><rect x="782.9" y="606.2" width="3.8" height="3.4" fill="#17151f"/><rect x="788.0" y="606.2" width="3.8" height="3.4" fill="#17151f"/><rect x="793.1" y="606.2" width="3.8" height="3.4" fill="#17151f"/><rect x="798.2" y="606.2" width="3.8" height="3.4" fill="#17151f"/><rect x="803.3" y="606.2" width="3.8" height="3.4" fill="#17151f"/><rect x="808.4" y="606.2" width="3.8" height="3.4" fill="#17151f"/><rect x="813.5" y="606.2" width="3.8" height="3.4" fill="#17151f"/><rect x="818.6" y="606.2" width="3.8" height="3.4" fill="#17151f"/><rect x="742.1" y="610.9" width="3.8" height="3.4" fill="#17151f"/><rect x="747.2" y="610.9" width="3.8" height="3.4" fill="#17151f"/><rect x="752.3" y="610.9" width="3.8" height="3.4" fill="#17151f"/><rect x="757.4" y="610.9" width="3.8" height="3.4" fill="#17151f"/><rect x="762.5" y="610.9" width="3.8" height="3.4" fill="#17151f"/><rect x="767.6" y="610.9" width="3.8" height="3.4" fill="#17151f"/><rect x="772.7" y="610.9" width="3.8" height="3.4" fill="#17151f"/><rect x="777.8" y="610.9" width="3.8" height="3.4" fill="#17151f"/><rect x="782.9" y="610.9" width="3.8" height="3.4" fill="#17151f"/><rect x="788.0" y="610.9" width="3.8" height="3.4" fill="#17151f"/><rect x="793.1" y="610.9" width="3.8" height="3.4" fill="#17151f"/><rect x="798.2" y="610.9" width="3.8" height="3.4" fill="#17151f"/><rect x="803.3" y="610.9" width="3.8" height="3.4" fill="#17151f"/><rect x="808.4" y="610.9" width="3.8" height="3.4" fill="#17151f"/><rect x="813.5" y="610.9" width="3.8" height="3.4" fill="#17151f"/><rect x="818.6" y="610.9" width="3.8" height="3.4" fill="#17151f"/><rect x="782.9" y="587.5" width="14.0" height="3.4" fill="#3f3196"/><rect x="813.5" y="587.5" width="8.9" height="3.4" fill="#3f3196"/><rect x="798.2" y="592.2" width="14.0" height="3.4" fill="#3f3196"/><rect x="757.4" y="601.5" width="14.0" height="3.4" fill="#3f3196"/><rect x="772.7" y="606.2" width="8.9" height="3.4" fill="#3f3196"/><rect x="742.1" y="610.9" width="14.0" height="3.4" fill="#3f3196"/><rect x="836" y="585.8" width="82" height="38.7" fill="#0a0a0c"/><rect x="837.1" y="587.5" width="3.8" height="3.4" fill="#17151f"/><rect x="842.2" y="587.5" width="3.8" height="3.4" fill="#17151f"/><rect x="847.3" y="587.5" width="3.8" height="3.4" fill="#17151f"/><rect x="852.4" y="587.5" width="3.8" height="3.4" fill="#17151f"/><rect x="857.5" y="587.5" width="3.8" height="3.4" fill="#17151f"/><rect x="862.6" y="587.5" width="3.8" height="3.4" fill="#17151f"/><rect x="867.7" y="587.5" width="3.8" height="3.4" fill="#17151f"/><rect x="872.8" y="587.5" width="3.8" height="3.4" fill="#17151f"/><rect x="877.9" y="587.5" width="3.8" height="3.4" fill="#17151f"/><rect x="883.0" y="587.5" width="3.8" height="3.4" fill="#17151f"/><rect x="888.1" y="587.5" width="3.8" height="3.4" fill="#17151f"/><rect x="893.2" y="587.5" width="3.8" height="3.4" fill="#17151f"/><rect x="898.3" y="587.5" width="3.8" height="3.4" fill="#17151f"/><rect x="903.4" y="587.5" width="3.8" height="3.4" fill="#17151f"/><rect x="908.5" y="587.5" width="3.8" height="3.4" fill="#17151f"/><rect x="913.6" y="587.5" width="3.8" height="3.4" fill="#17151f"/><rect x="837.1" y="592.2" width="3.8" height="3.4" fill="#17151f"/><rect x="842.2" y="592.2" width="3.8" height="3.4" fill="#17151f"/><rect x="847.3" y="592.2" width="3.8" height="3.4" fill="#17151f"/><rect x="852.4" y="592.2" width="3.8" height="3.4" fill="#17151f"/><rect x="857.5" y="592.2" width="3.8" height="3.4" fill="#17151f"/><rect x="862.6" y="592.2" width="3.8" height="3.4" fill="#17151f"/><rect x="867.7" y="592.2" width="3.8" height="3.4" fill="#17151f"/><rect x="872.8" y="592.2" width="3.8" height="3.4" fill="#17151f"/><rect x="877.9" y="592.2" width="3.8" height="3.4" fill="#17151f"/><rect x="883.0" y="592.2" width="3.8" height="3.4" fill="#17151f"/><rect x="888.1" y="592.2" width="3.8" height="3.4" fill="#17151f"/><rect x="893.2" y="592.2" width="3.8" height="3.4" fill="#17151f"/><rect x="898.3" y="592.2" width="3.8" height="3.4" fill="#17151f"/><rect x="903.4" y="592.2" width="3.8" height="3.4" fill="#17151f"/><rect x="908.5" y="592.2" width="3.8" height="3.4" fill="#17151f"/><rect x="913.6" y="592.2" width="3.8" height="3.4" fill="#17151f"/><rect x="837.1" y="596.9" width="3.8" height="3.4" fill="#17151f"/><rect x="842.2" y="596.9" width="3.8" height="3.4" fill="#17151f"/><rect x="847.3" y="596.9" width="3.8" height="3.4" fill="#17151f"/><rect x="852.4" y="596.9" width="3.8" height="3.4" fill="#17151f"/><rect x="857.5" y="596.9" width="3.8" height="3.4" fill="#17151f"/><rect x="862.6" y="596.9" width="3.8" height="3.4" fill="#17151f"/><rect x="867.7" y="596.9" width="3.8" height="3.4" fill="#17151f"/><rect x="872.8" y="596.9" width="3.8" height="3.4" fill="#17151f"/><rect x="877.9" y="596.9" width="3.8" height="3.4" fill="#17151f"/><rect x="883.0" y="596.9" width="3.8" height="3.4" fill="#17151f"/><rect x="888.1" y="596.9" width="3.8" height="3.4" fill="#17151f"/><rect x="893.2" y="596.9" width="3.8" height="3.4" fill="#17151f"/><rect x="898.3" y="596.9" width="3.8" height="3.4" fill="#17151f"/><rect x="903.4" y="596.9" width="3.8" height="3.4" fill="#17151f"/><rect x="908.5" y="596.9" width="3.8" height="3.4" fill="#17151f"/><rect x="913.6" y="596.9" width="3.8" height="3.4" fill="#17151f"/><rect x="837.1" y="601.5" width="3.8" height="3.4" fill="#17151f"/><rect x="842.2" y="601.5" width="3.8" height="3.4" fill="#17151f"/><rect x="847.3" y="601.5" width="3.8" height="3.4" fill="#17151f"/><rect x="852.4" y="601.5" width="3.8" height="3.4" fill="#17151f"/><rect x="857.5" y="601.5" width="3.8" height="3.4" fill="#17151f"/><rect x="862.6" y="601.5" width="3.8" height="3.4" fill="#17151f"/><rect x="867.7" y="601.5" width="3.8" height="3.4" fill="#17151f"/><rect x="872.8" y="601.5" width="3.8" height="3.4" fill="#17151f"/><rect x="877.9" y="601.5" width="3.8" height="3.4" fill="#17151f"/><rect x="883.0" y="601.5" width="3.8" height="3.4" fill="#17151f"/><rect x="888.1" y="601.5" width="3.8" height="3.4" fill="#17151f"/><rect x="893.2" y="601.5" width="3.8" height="3.4" fill="#17151f"/><rect x="898.3" y="601.5" width="3.8" height="3.4" fill="#17151f"/><rect x="903.4" y="601.5" width="3.8" height="3.4" fill="#17151f"/><rect x="908.5" y="601.5" width="3.8" height="3.4" fill="#17151f"/><rect x="913.6" y="601.5" width="3.8" height="3.4" fill="#17151f"/><rect x="837.1" y="606.2" width="3.8" height="3.4" fill="#17151f"/><rect x="842.2" y="606.2" width="3.8" height="3.4" fill="#17151f"/><rect x="847.3" y="606.2" width="3.8" height="3.4" fill="#17151f"/><rect x="852.4" y="606.2" width="3.8" height="3.4" fill="#17151f"/><rect x="857.5" y="606.2" width="3.8" height="3.4" fill="#17151f"/><rect x="862.6" y="606.2" width="3.8" height="3.4" fill="#17151f"/><rect x="867.7" y="606.2" width="3.8" height="3.4" fill="#17151f"/><rect x="872.8" y="606.2" width="3.8" height="3.4" fill="#17151f"/><rect x="877.9" y="606.2" width="3.8" height="3.4" fill="#17151f"/><rect x="883.0" y="606.2" width="3.8" height="3.4" fill="#17151f"/><rect x="888.1" y="606.2" width="3.8" height="3.4" fill="#17151f"/><rect x="893.2" y="606.2" width="3.8" height="3.4" fill="#17151f"/><rect x="898.3" y="606.2" width="3.8" height="3.4" fill="#17151f"/><rect x="903.4" y="606.2" width="3.8" height="3.4" fill="#17151f"/><rect x="908.5" y="606.2" width="3.8" height="3.4" fill="#17151f"/><rect x="913.6" y="606.2" width="3.8" height="3.4" fill="#17151f"/><rect x="837.1" y="610.9" width="3.8" height="3.4" fill="#17151f"/><rect x="842.2" y="610.9" width="3.8" height="3.4" fill="#17151f"/><rect x="847.3" y="610.9" width="3.8" height="3.4" fill="#17151f"/><rect x="852.4" y="610.9" width="3.8" height="3.4" fill="#17151f"/><rect x="857.5" y="610.9" width="3.8" height="3.4" fill="#17151f"/><rect x="862.6" y="610.9" width="3.8" height="3.4" fill="#17151f"/><rect x="867.7" y="610.9" width="3.8" height="3.4" fill="#17151f"/><rect x="872.8" y="610.9" width="3.8" height="3.4" fill="#17151f"/><rect x="877.9" y="610.9" width="3.8" height="3.4" fill="#17151f"/><rect x="883.0" y="610.9" width="3.8" height="3.4" fill="#17151f"/><rect x="888.1" y="610.9" width="3.8" height="3.4" fill="#17151f"/><rect x="893.2" y="610.9" width="3.8" height="3.4" fill="#17151f"/><rect x="898.3" y="610.9" width="3.8" height="3.4" fill="#17151f"/><rect x="903.4" y="610.9" width="3.8" height="3.4" fill="#17151f"/><rect x="908.5" y="610.9" width="3.8" height="3.4" fill="#17151f"/><rect x="913.6" y="610.9" width="3.8" height="3.4" fill="#17151f"/><rect x="877.9" y="587.5" width="39.5" height="3.4" fill="#3f3196"/><rect x="852.4" y="601.5" width="14.0" height="3.4" fill="#3f3196"/><rect x="867.7" y="606.2" width="8.9" height="3.4" fill="#3f3196"/><rect x="837.1" y="610.9" width="14.0" height="3.4" fill="#3f3196"/><rect x="932" y="585.8" width="81.3" height="38.5" fill="#0a0a0c"/><rect x="932.9" y="587.5" width="3.8" height="3.4" fill="#17151f"/><rect x="938.0" y="587.5" width="3.8" height="3.4" fill="#17151f"/><rect x="943.1" y="587.5" width="3.8" height="3.4" fill="#17151f"/><rect x="948.2" y="587.5" width="3.8" height="3.4" fill="#17151f"/><rect x="953.3" y="587.5" width="3.8" height="3.4" fill="#17151f"/><rect x="958.4" y="587.5" width="3.8" height="3.4" fill="#17151f"/><rect x="963.5" y="587.5" width="3.8" height="3.4" fill="#17151f"/><rect x="968.6" y="587.5" width="3.8" height="3.4" fill="#17151f"/><rect x="973.7" y="587.5" width="3.8" height="3.4" fill="#17151f"/><rect x="978.8" y="587.5" width="3.8" height="3.4" fill="#17151f"/><rect x="983.9" y="587.5" width="3.8" height="3.4" fill="#17151f"/><rect x="989.0" y="587.5" width="3.8" height="3.4" fill="#17151f"/><rect x="994.1" y="587.5" width="3.8" height="3.4" fill="#17151f"/><rect x="999.2" y="587.5" width="3.8" height="3.4" fill="#17151f"/><rect x="1004.3" y="587.5" width="3.8" height="3.4" fill="#17151f"/><rect x="1009.4" y="587.5" width="3.8" height="3.4" fill="#17151f"/><rect x="932.9" y="592.2" width="3.8" height="3.4" fill="#17151f"/><rect x="938.0" y="592.2" width="3.8" height="3.4" fill="#17151f"/><rect x="943.1" y="592.2" width="3.8" height="3.4" fill="#17151f"/><rect x="948.2" y="592.2" width="3.8" height="3.4" fill="#17151f"/><rect x="953.3" y="592.2" width="3.8" height="3.4" fill="#17151f"/><rect x="958.4" y="592.2" width="3.8" height="3.4" fill="#17151f"/><rect x="963.5" y="592.2" width="3.8" height="3.4" fill="#17151f"/><rect x="968.6" y="592.2" width="3.8" height="3.4" fill="#17151f"/><rect x="973.7" y="592.2" width="3.8" height="3.4" fill="#17151f"/><rect x="978.8" y="592.2" width="3.8" height="3.4" fill="#17151f"/><rect x="983.9" y="592.2" width="3.8" height="3.4" fill="#17151f"/><rect x="989.0" y="592.2" width="3.8" height="3.4" fill="#17151f"/><rect x="994.1" y="592.2" width="3.8" height="3.4" fill="#17151f"/><rect x="999.2" y="592.2" width="3.8" height="3.4" fill="#17151f"/><rect x="1004.3" y="592.2" width="3.8" height="3.4" fill="#17151f"/><rect x="1009.4" y="592.2" width="3.8" height="3.4" fill="#17151f"/><rect x="932.9" y="596.9" width="3.8" height="3.4" fill="#17151f"/><rect x="938.0" y="596.9" width="3.8" height="3.4" fill="#17151f"/><rect x="943.1" y="596.9" width="3.8" height="3.4" fill="#17151f"/><rect x="948.2" y="596.9" width="3.8" height="3.4" fill="#17151f"/><rect x="953.3" y="596.9" width="3.8" height="3.4" fill="#17151f"/><rect x="958.4" y="596.9" width="3.8" height="3.4" fill="#17151f"/><rect x="963.5" y="596.9" width="3.8" height="3.4" fill="#17151f"/><rect x="968.6" y="596.9" width="3.8" height="3.4" fill="#17151f"/><rect x="973.7" y="596.9" width="3.8" height="3.4" fill="#17151f"/><rect x="978.8" y="596.9" width="3.8" height="3.4" fill="#17151f"/><rect x="983.9" y="596.9" width="3.8" height="3.4" fill="#17151f"/><rect x="989.0" y="596.9" width="3.8" height="3.4" fill="#17151f"/><rect x="994.1" y="596.9" width="3.8" height="3.4" fill="#17151f"/><rect x="999.2" y="596.9" width="3.8" height="3.4" fill="#17151f"/><rect x="1004.3" y="596.9" width="3.8" height="3.4" fill="#17151f"/><rect x="1009.4" y="596.9" width="3.8" height="3.4" fill="#17151f"/><rect x="932.9" y="601.5" width="3.8" height="3.4" fill="#17151f"/><rect x="938.0" y="601.5" width="3.8" height="3.4" fill="#17151f"/><rect x="943.1" y="601.5" width="3.8" height="3.4" fill="#17151f"/><rect x="948.2" y="601.5" width="3.8" height="3.4" fill="#17151f"/><rect x="953.3" y="601.5" width="3.8" height="3.4" fill="#17151f"/><rect x="958.4" y="601.5" width="3.8" height="3.4" fill="#17151f"/><rect x="963.5" y="601.5" width="3.8" height="3.4" fill="#17151f"/><rect x="968.6" y="601.5" width="3.8" height="3.4" fill="#17151f"/><rect x="973.7" y="601.5" width="3.8" height="3.4" fill="#17151f"/><rect x="978.8" y="601.5" width="3.8" height="3.4" fill="#17151f"/><rect x="983.9" y="601.5" width="3.8" height="3.4" fill="#17151f"/><rect x="989.0" y="601.5" width="3.8" height="3.4" fill="#17151f"/><rect x="994.1" y="601.5" width="3.8" height="3.4" fill="#17151f"/><rect x="999.2" y="601.5" width="3.8" height="3.4" fill="#17151f"/><rect x="1004.3" y="601.5" width="3.8" height="3.4" fill="#17151f"/><rect x="1009.4" y="601.5" width="3.8" height="3.4" fill="#17151f"/><rect x="932.9" y="606.2" width="3.8" height="3.4" fill="#17151f"/><rect x="938.0" y="606.2" width="3.8" height="3.4" fill="#17151f"/><rect x="943.1" y="606.2" width="3.8" height="3.4" fill="#17151f"/><rect x="948.2" y="606.2" width="3.8" height="3.4" fill="#17151f"/><rect x="953.3" y="606.2" width="3.8" height="3.4" fill="#17151f"/><rect x="958.4" y="606.2" width="3.8" height="3.4" fill="#17151f"/><rect x="963.5" y="606.2" width="3.8" height="3.4" fill="#17151f"/><rect x="968.6" y="606.2" width="3.8" height="3.4" fill="#17151f"/><rect x="973.7" y="606.2" width="3.8" height="3.4" fill="#17151f"/><rect x="978.8" y="606.2" width="3.8" height="3.4" fill="#17151f"/><rect x="983.9" y="606.2" width="3.8" height="3.4" fill="#17151f"/><rect x="989.0" y="606.2" width="3.8" height="3.4" fill="#17151f"/><rect x="994.1" y="606.2" width="3.8" height="3.4" fill="#17151f"/><rect x="999.2" y="606.2" width="3.8" height="3.4" fill="#17151f"/><rect x="1004.3" y="606.2" width="3.8" height="3.4" fill="#17151f"/><rect x="1009.4" y="606.2" width="3.8" height="3.4" fill="#17151f"/><rect x="932.9" y="610.9" width="3.8" height="3.4" fill="#17151f"/><rect x="938.0" y="610.9" width="3.8" height="3.4" fill="#17151f"/><rect x="943.1" y="610.9" width="3.8" height="3.4" fill="#17151f"/><rect x="948.2" y="610.9" width="3.8" height="3.4" fill="#17151f"/><rect x="953.3" y="610.9" width="3.8" height="3.4" fill="#17151f"/><rect x="958.4" y="610.9" width="3.8" height="3.4" fill="#17151f"/><rect x="963.5" y="610.9" width="3.8" height="3.4" fill="#17151f"/><rect x="968.6" y="610.9" width="3.8" height="3.4" fill="#17151f"/><rect x="973.7" y="610.9" width="3.8" height="3.4" fill="#17151f"/><rect x="978.8" y="610.9" width="3.8" height="3.4" fill="#17151f"/><rect x="983.9" y="610.9" width="3.8" height="3.4" fill="#17151f"/><rect x="989.0" y="610.9" width="3.8" height="3.4" fill="#17151f"/><rect x="994.1" y="610.9" width="3.8" height="3.4" fill="#17151f"/><rect x="999.2" y="610.9" width="3.8" height="3.4" fill="#17151f"/><rect x="1004.3" y="610.9" width="3.8" height="3.4" fill="#17151f"/><rect x="1009.4" y="610.9" width="3.8" height="3.4" fill="#17151f"/><rect x="1004.3" y="587.5" width="8.9" height="3.4" fill="#3f3196"/><rect x="989.0" y="592.2" width="14.0" height="3.4" fill="#3f3196"/><rect x="973.7" y="596.9" width="14.0" height="3.4" fill="#3f3196"/><rect x="963.5" y="601.5" width="8.9" height="3.4" fill="#3f3196"/><rect x="948.2" y="606.2" width="14.0" height="3.4" fill="#3f3196"/><rect x="932.9" y="610.9" width="14.0" height="3.4" fill="#3f3196"/><path d="M1076.5 614.0999999999999 L1079.3 611.5 L1082.1 614.0999999999999 M1076.5 617.0999999999999 L1079.3 619.6999999999999 L1082.1 617.0999999999999" fill="none" stroke="#5a5a5e" stroke-width="1.1" stroke-linecap="round" stroke-linejoin="round"/>
<path d="M1169.5 614.0999999999999 L1172.3 611.5 L1175.1 614.0999999999999 M1169.5 617.0999999999999 L1172.3 619.6999999999999 L1175.1 617.0999999999999" fill="none" stroke="#5a5a5e" stroke-width="1.1" stroke-linecap="round" stroke-linejoin="round"/>
<path d="M1206.5 614.0999999999999 L1209.3 611.5 L1212.1 614.0999999999999 M1206.5 617.0999999999999 L1209.3 619.6999999999999 L1212.1 617.0999999999999" fill="none" stroke="#5a5a5e" stroke-width="1.1" stroke-linecap="round" stroke-linejoin="round"/>
<circle cx="1266.6" cy="605.6" r="1.7" fill="#fff"/><circle cx="1272.4" cy="605.6" r="1.7" fill="#fff"/><circle cx="1278.2" cy="605.6" r="1.7" fill="#fff"/>
</svg>
<div class="t" style="left:1048.3px;top:593px;font-size:10.8px;color:#8e8e93">Tonalité</div>
<div class="t" style="left:1126.8px;top:593px;font-size:10.8px;color:#8e8e93">Gamme</div>
<div class="t" style="left:1187px;top:593px;font-size:10.8px;color:#8e8e93">Longueur</div>
<div class="t" style="left:1048.3px;top:608.5px;font-size:13px;color:#f2f2f4">Sol<span style="font-size:9px;vertical-align:3px">#</span></div>
<div class="t" style="left:1126.8px;top:608.5px;font-size:13px;color:#f2f2f4">Mi&#8230;n)</div>
<div class="t" style="left:1187px;top:608.5px;font-size:13px;color:#f2f2f4">64</div>
<div class="a" style="left:309px;top:630px;width:294px;height:249px;background:#161618"></div>
<div class="a" style="left:603px;top:630px;width:700px;height:249px;background:#111113"></div>
<div class="a" style="left:309px;top:630px;width:294px;height:40px;background:#252529"></div><div class="a" style="left:309px;top:629.3px;width:994px;height:1px;background:#1f1f22"></div>
<div class="t" style="left:362.3px;top:644.3px;font-size:14px;color:#f0f0f2">Mi3</div>
<div class="t" style="left:435.3px;top:644.4px;font-size:14.5px;color:#8e8e93">Activé/Desactivé</div>
<div class="t" style="left:362.3px;top:684.3px;font-size:14px;color:#f0f0f2">Ré<span style="font-size:11px;vertical-align:1px">#</span>3</div>
<div class="t" style="left:435.3px;top:684.4px;font-size:14.5px;color:#8e8e93">Activé/Desactivé</div>
<div class="t" style="left:362.3px;top:724.3px;font-size:14px;color:#f0f0f2">Do<span style="font-size:11px;vertical-align:1px">#</span>3</div>
<div class="t" style="left:435.3px;top:724.4px;font-size:14.5px;color:#8e8e93">Activé/Desactivé</div>
<div class="t" style="left:362.3px;top:764.3px;font-size:14px;color:#f0f0f2">Si2</div>
<div class="t" style="left:435.3px;top:764.4px;font-size:14.5px;color:#8e8e93">Activé/Desactivé</div>
<div class="t" style="left:362.3px;top:804.3px;font-size:14px;color:#f0f0f2">La<span style="font-size:11px;vertical-align:1px">#</span>2</div>
<div class="t" style="left:435.3px;top:804.4px;font-size:14.5px;color:#8e8e93">Activé/Desactivé</div>
<div class="t" style="left:362.3px;top:844.3px;font-size:14px;color:#f0f0f2">Sol<span style="font-size:11px;vertical-align:1px">#</span>2</div>
<div class="t" style="left:435.3px;top:844.4px;font-size:14.5px;color:#8e8e93">Activé/Desactivé</div>
<svg style="left:0;top:0" width="1303" height="880">
<path d="M328.3 643.5 L335.3 650.5 L328.3 657.5" fill="none" stroke="#fff" stroke-width="1.5" stroke-linecap="round" stroke-linejoin="round"/>
<path d="M390 650.3 L392.8 647.7 L395.6 650.3 M390 653.3 L392.8 655.9 L395.6 653.3" fill="none" stroke="#4a4a4e" stroke-width="1.1" stroke-linecap="round" stroke-linejoin="round"/>
<circle cx="573.3" cy="650.7" r="12.5" fill="#7655f5"/>
<path d="M574.8 645.3 V654.8" stroke="#000" stroke-width="1.3"/><ellipse cx="572.9" cy="655.3" rx="2.3" ry="1.8" fill="#000" transform="rotate(-20 572.9 655.3)"/>
<rect x="603" y="670" width="700" height="1.2" fill="#1f1f22"/>
<path d="M328.3 683.5 L335.3 690.5 L328.3 697.5" fill="none" stroke="#fff" stroke-width="1.5" stroke-linecap="round" stroke-linejoin="round"/>
<path d="M397.2 690.3 L400.0 687.7 L402.8 690.3 M397.2 693.3 L400.0 695.9 L402.8 693.3" fill="none" stroke="#4a4a4e" stroke-width="1.1" stroke-linecap="round" stroke-linejoin="round"/>
<circle cx="573.3" cy="690.7" r="12.5" fill="#7655f5"/>
<path d="M574.8 685.3 V694.8" stroke="#000" stroke-width="1.3"/><ellipse cx="572.9" cy="695.3" rx="2.3" ry="1.8" fill="#000" transform="rotate(-20 572.9 695.3)"/>
<rect x="603" y="710" width="700" height="1.2" fill="#1f1f22"/>
<path d="M328.3 723.5 L335.3 730.5 L328.3 737.5" fill="none" stroke="#fff" stroke-width="1.5" stroke-linecap="round" stroke-linejoin="round"/>
<path d="M398.5 730.3 L401.3 727.7 L404.1 730.3 M398.5 733.3 L401.3 735.9 L404.1 733.3" fill="none" stroke="#4a4a4e" stroke-width="1.1" stroke-linecap="round" stroke-linejoin="round"/>
<circle cx="573.3" cy="730.7" r="12.5" fill="#7655f5"/>
<path d="M574.8 725.3 V734.8" stroke="#000" stroke-width="1.3"/><ellipse cx="572.9" cy="735.3" rx="2.3" ry="1.8" fill="#000" transform="rotate(-20 572.9 735.3)"/>
<rect x="603" y="750" width="700" height="1.2" fill="#1f1f22"/>
<path d="M328.3 763.5 L335.3 770.5 L328.3 777.5" fill="none" stroke="#fff" stroke-width="1.5" stroke-linecap="round" stroke-linejoin="round"/>
<path d="M386 770.3 L388.8 767.7 L391.6 770.3 M386 773.3 L388.8 775.9 L391.6 773.3" fill="none" stroke="#4a4a4e" stroke-width="1.1" stroke-linecap="round" stroke-linejoin="round"/>
<circle cx="573.3" cy="770.7" r="12.5" fill="#7655f5"/>
<path d="M574.8 765.3 V774.8" stroke="#000" stroke-width="1.3"/><ellipse cx="572.9" cy="775.3" rx="2.3" ry="1.8" fill="#000" transform="rotate(-20 572.9 775.3)"/>
<rect x="603" y="790" width="700" height="1.2" fill="#1f1f22"/>
<path d="M328.3 803.5 L335.3 810.5 L328.3 817.5" fill="none" stroke="#fff" stroke-width="1.5" stroke-linecap="round" stroke-linejoin="round"/>
<path d="M395.3 810.3 L398.1 807.7 L400.90000000000003 810.3 M395.3 813.3 L398.1 815.9 L400.90000000000003 813.3" fill="none" stroke="#4a4a4e" stroke-width="1.1" stroke-linecap="round" stroke-linejoin="round"/>
<circle cx="573.3" cy="810.7" r="12.5" fill="#7655f5"/>
<path d="M574.8 805.3 V814.8" stroke="#000" stroke-width="1.3"/><ellipse cx="572.9" cy="815.3" rx="2.3" ry="1.8" fill="#000" transform="rotate(-20 572.9 815.3)"/>
<rect x="603" y="830" width="700" height="1.2" fill="#1f1f22"/>
<path d="M328.3 843.5 L335.3 850.5 L328.3 857.5" fill="none" stroke="#fff" stroke-width="1.5" stroke-linecap="round" stroke-linejoin="round"/>
<path d="M399.8 850.3 L402.6 847.7 L405.40000000000003 850.3 M399.8 853.3 L402.6 855.9 L405.40000000000003 853.3" fill="none" stroke="#4a4a4e" stroke-width="1.1" stroke-linecap="round" stroke-linejoin="round"/>
<circle cx="573.3" cy="850.7" r="12.5" fill="#7655f5"/>
<path d="M574.8 845.3 V854.8" stroke="#000" stroke-width="1.3"/><ellipse cx="572.9" cy="855.3" rx="2.3" ry="1.8" fill="#000" transform="rotate(-20 572.9 855.3)"/>
<rect x="603" y="870" width="700" height="1.2" fill="#1f1f22"/>
<rect x="351" y="630" width="1" height="241" fill="#222225"/>
<rect x="596" y="745" width="2.5" height="20" rx="1.2" fill="#3a3a3e"/>
<rect x="615.2" y="637.1" width="38.6" height="26.5" rx="3" fill="#1f1a31" stroke="#0a0a0c" stroke-width="0.8"/>
<rect x="656.6" y="637.1" width="38.6" height="26.5" rx="3" fill="#1f1a31" stroke="#0a0a0c" stroke-width="0.8"/>
<rect x="701.4" y="637.1" width="38.6" height="26.5" rx="3" fill="#1f1a31" stroke="#0a0a0c" stroke-width="0.8"/>
<rect x="742.8" y="637.1" width="38.6" height="26.5" rx="3" fill="#1f1a31" stroke="#0a0a0c" stroke-width="0.8"/>
<rect x="786.5" y="637.1" width="38.6" height="26.5" rx="3" fill="#1f1a31" stroke="#0a0a0c" stroke-width="0.8"/>
<rect x="827.9" y="637.1" width="38.6" height="26.5" rx="3" fill="#1f1a31" stroke="#0a0a0c" stroke-width="0.8"/>
<rect x="870.7" y="637.1" width="38.6" height="26.5" rx="3" fill="#1f1a31" stroke="#0a0a0c" stroke-width="0.8"/>
<rect x="912.1" y="637.1" width="38.6" height="26.5" rx="3" fill="#1f1a31" stroke="#0a0a0c" stroke-width="0.8"/>
<rect x="1210.6" y="637.1" width="38.6" height="26.5" rx="3" fill="#1f1a31" stroke="#0a0a0c" stroke-width="0.8"/>
<rect x="1252.0" y="637.1" width="38.6" height="26.5" rx="3" fill="#1f1a31" stroke="#0a0a0c" stroke-width="0.8"/>
<rect x="956.0" y="637.1" width="250.1" height="26.5" rx="3" fill="#5f42d9"/>
<rect x="615.2" y="677.1" width="38.6" height="26.5" rx="3" fill="#1f1a31" stroke="#0a0a0c" stroke-width="0.8"/>
<rect x="656.6" y="677.1" width="38.6" height="26.5" rx="3" fill="#1f1a31" stroke="#0a0a0c" stroke-width="0.8"/>
<rect x="701.4" y="677.1" width="38.6" height="26.5" rx="3" fill="#1f1a31" stroke="#0a0a0c" stroke-width="0.8"/>
<rect x="742.8" y="677.1" width="38.6" height="26.5" rx="3" fill="#1f1a31" stroke="#0a0a0c" stroke-width="0.8"/>
<rect x="786.5" y="677.1" width="38.6" height="26.5" rx="3" fill="#1f1a31" stroke="#0a0a0c" stroke-width="0.8"/>
<rect x="827.9" y="677.1" width="38.6" height="26.5" rx="3" fill="#1f1a31" stroke="#0a0a0c" stroke-width="0.8"/>
<rect x="870.7" y="677.1" width="38.6" height="26.5" rx="3" fill="#1f1a31" stroke="#0a0a0c" stroke-width="0.8"/>
<rect x="912.1" y="677.1" width="38.6" height="26.5" rx="3" fill="#1f1a31" stroke="#0a0a0c" stroke-width="0.8"/>
<rect x="956.0" y="677.1" width="38.6" height="26.5" rx="3" fill="#1f1a31" stroke="#0a0a0c" stroke-width="0.8"/>
<rect x="997.4" y="677.1" width="38.6" height="26.5" rx="3" fill="#1f1a31" stroke="#0a0a0c" stroke-width="0.8"/>
<rect x="1040.8" y="677.1" width="38.6" height="26.5" rx="3" fill="#1f1a31" stroke="#0a0a0c" stroke-width="0.8"/>
<rect x="1082.2" y="677.1" width="38.6" height="26.5" rx="3" fill="#1f1a31" stroke="#0a0a0c" stroke-width="0.8"/>
<rect x="1126.1" y="677.1" width="38.6" height="26.5" rx="3" fill="#1f1a31" stroke="#0a0a0c" stroke-width="0.8"/>
<rect x="1167.5" y="677.1" width="38.6" height="26.5" rx="3" fill="#1f1a31" stroke="#0a0a0c" stroke-width="0.8"/>
<rect x="1210.6" y="677.1" width="38.6" height="26.5" rx="3" fill="#1f1a31" stroke="#0a0a0c" stroke-width="0.8"/>
<rect x="1252.0" y="677.1" width="38.6" height="26.5" rx="3" fill="#5f42d9"/>
<rect x="615.2" y="717.1" width="38.6" height="26.5" rx="3" fill="#1f1a31" stroke="#0a0a0c" stroke-width="0.8"/>
<rect x="656.6" y="717.1" width="38.6" height="26.5" rx="3" fill="#1f1a31" stroke="#0a0a0c" stroke-width="0.8"/>
<rect x="701.4" y="717.1" width="38.6" height="26.5" rx="3" fill="#1f1a31" stroke="#0a0a0c" stroke-width="0.8"/>
<rect x="742.8" y="717.1" width="38.6" height="26.5" rx="3" fill="#1f1a31" stroke="#0a0a0c" stroke-width="0.8"/>
<rect x="786.5" y="717.1" width="38.6" height="26.5" rx="3" fill="#1f1a31" stroke="#0a0a0c" stroke-width="0.8"/>
<rect x="827.9" y="717.1" width="38.6" height="26.5" rx="3" fill="#1f1a31" stroke="#0a0a0c" stroke-width="0.8"/>
<rect x="870.7" y="717.1" width="38.6" height="26.5" rx="3" fill="#1f1a31" stroke="#0a0a0c" stroke-width="0.8"/>
<rect x="912.1" y="717.1" width="38.6" height="26.5" rx="3" fill="#1f1a31" stroke="#0a0a0c" stroke-width="0.8"/>
<rect x="956.0" y="717.1" width="38.6" height="26.5" rx="3" fill="#1f1a31" stroke="#0a0a0c" stroke-width="0.8"/>
<rect x="997.4" y="717.1" width="38.6" height="26.5" rx="3" fill="#1f1a31" stroke="#0a0a0c" stroke-width="0.8"/>
<rect x="1040.8" y="717.1" width="38.6" height="26.5" rx="3" fill="#1f1a31" stroke="#0a0a0c" stroke-width="0.8"/>
<rect x="1082.2" y="717.1" width="38.6" height="26.5" rx="3" fill="#1f1a31" stroke="#0a0a0c" stroke-width="0.8"/>
<rect x="1126.1" y="717.1" width="38.6" height="26.5" rx="3" fill="#1f1a31" stroke="#0a0a0c" stroke-width="0.8"/>
<rect x="1167.5" y="717.1" width="38.6" height="26.5" rx="3" fill="#1f1a31" stroke="#0a0a0c" stroke-width="0.8"/>
<rect x="1252.0" y="717.1" width="38.6" height="26.5" rx="3" fill="#1f1a31" stroke="#0a0a0c" stroke-width="0.8"/>
<rect x="1210.6" y="717.1" width="38.6" height="26.5" rx="3" fill="#5f42d9"/>
<rect x="615.2" y="757.1" width="38.6" height="26.5" rx="3" fill="#1f1a31" stroke="#0a0a0c" stroke-width="0.8"/>
<rect x="656.6" y="757.1" width="38.6" height="26.5" rx="3" fill="#1f1a31" stroke="#0a0a0c" stroke-width="0.8"/>
<rect x="701.4" y="757.1" width="38.6" height="26.5" rx="3" fill="#1f1a31" stroke="#0a0a0c" stroke-width="0.8"/>
<rect x="870.7" y="757.1" width="38.6" height="26.5" rx="3" fill="#1f1a31" stroke="#0a0a0c" stroke-width="0.8"/>
<rect x="912.1" y="757.1" width="38.6" height="26.5" rx="3" fill="#1f1a31" stroke="#0a0a0c" stroke-width="0.8"/>
<rect x="956.0" y="757.1" width="38.6" height="26.5" rx="3" fill="#1f1a31" stroke="#0a0a0c" stroke-width="0.8"/>
<rect x="997.4" y="757.1" width="38.6" height="26.5" rx="3" fill="#1f1a31" stroke="#0a0a0c" stroke-width="0.8"/>
<rect x="1040.8" y="757.1" width="38.6" height="26.5" rx="3" fill="#1f1a31" stroke="#0a0a0c" stroke-width="0.8"/>
<rect x="1082.2" y="757.1" width="38.6" height="26.5" rx="3" fill="#1f1a31" stroke="#0a0a0c" stroke-width="0.8"/>
<rect x="1126.1" y="757.1" width="38.6" height="26.5" rx="3" fill="#1f1a31" stroke="#0a0a0c" stroke-width="0.8"/>
<rect x="1167.5" y="757.1" width="38.6" height="26.5" rx="3" fill="#1f1a31" stroke="#0a0a0c" stroke-width="0.8"/>
<rect x="1210.6" y="757.1" width="38.6" height="26.5" rx="3" fill="#1f1a31" stroke="#0a0a0c" stroke-width="0.8"/>
<rect x="1252.0" y="757.1" width="38.6" height="26.5" rx="3" fill="#1f1a31" stroke="#0a0a0c" stroke-width="0.8"/>
<rect x="742.8" y="757.1" width="123.7" height="26.5" rx="3" fill="#5f42d9"/>
<rect x="615.2" y="797.1" width="38.6" height="26.5" rx="3" fill="#1f1a31" stroke="#0a0a0c" stroke-width="0.8"/>
<rect x="656.6" y="797.1" width="38.6" height="26.5" rx="3" fill="#1f1a31" stroke="#0a0a0c" stroke-width="0.8"/>
<rect x="701.4" y="797.1" width="38.6" height="26.5" rx="3" fill="#1f1a31" stroke="#0a0a0c" stroke-width="0.8"/>
<rect x="742.8" y="797.1" width="38.6" height="26.5" rx="3" fill="#1f1a31" stroke="#0a0a0c" stroke-width="0.8"/>
<rect x="786.5" y="797.1" width="38.6" height="26.5" rx="3" fill="#1f1a31" stroke="#0a0a0c" stroke-width="0.8"/>
<rect x="827.9" y="797.1" width="38.6" height="26.5" rx="3" fill="#1f1a31" stroke="#0a0a0c" stroke-width="0.8"/>
<rect x="956.0" y="797.1" width="38.6" height="26.5" rx="3" fill="#1f1a31" stroke="#0a0a0c" stroke-width="0.8"/>
<rect x="997.4" y="797.1" width="38.6" height="26.5" rx="3" fill="#1f1a31" stroke="#0a0a0c" stroke-width="0.8"/>
<rect x="1040.8" y="797.1" width="38.6" height="26.5" rx="3" fill="#1f1a31" stroke="#0a0a0c" stroke-width="0.8"/>
<rect x="1082.2" y="797.1" width="38.6" height="26.5" rx="3" fill="#1f1a31" stroke="#0a0a0c" stroke-width="0.8"/>
<rect x="1126.1" y="797.1" width="38.6" height="26.5" rx="3" fill="#1f1a31" stroke="#0a0a0c" stroke-width="0.8"/>
<rect x="1167.5" y="797.1" width="38.6" height="26.5" rx="3" fill="#1f1a31" stroke="#0a0a0c" stroke-width="0.8"/>
<rect x="1210.6" y="797.1" width="38.6" height="26.5" rx="3" fill="#1f1a31" stroke="#0a0a0c" stroke-width="0.8"/>
<rect x="1252.0" y="797.1" width="38.6" height="26.5" rx="3" fill="#1f1a31" stroke="#0a0a0c" stroke-width="0.8"/>
<rect x="870.7" y="797.1" width="80.0" height="26.5" rx="3" fill="#5f42d9"/>
<rect x="742.8" y="837.1" width="38.6" height="26.5" rx="3" fill="#1f1a31" stroke="#0a0a0c" stroke-width="0.8"/>
<rect x="786.5" y="837.1" width="38.6" height="26.5" rx="3" fill="#1f1a31" stroke="#0a0a0c" stroke-width="0.8"/>
<rect x="827.9" y="837.1" width="38.6" height="26.5" rx="3" fill="#1f1a31" stroke="#0a0a0c" stroke-width="0.8"/>
<rect x="870.7" y="837.1" width="38.6" height="26.5" rx="3" fill="#1f1a31" stroke="#0a0a0c" stroke-width="0.8"/>
<rect x="912.1" y="837.1" width="38.6" height="26.5" rx="3" fill="#1f1a31" stroke="#0a0a0c" stroke-width="0.8"/>
<rect x="956.0" y="837.1" width="38.6" height="26.5" rx="3" fill="#1f1a31" stroke="#0a0a0c" stroke-width="0.8"/>
<rect x="997.4" y="837.1" width="38.6" height="26.5" rx="3" fill="#1f1a31" stroke="#0a0a0c" stroke-width="0.8"/>
<rect x="1040.8" y="837.1" width="38.6" height="26.5" rx="3" fill="#1f1a31" stroke="#0a0a0c" stroke-width="0.8"/>
<rect x="1082.2" y="837.1" width="38.6" height="26.5" rx="3" fill="#1f1a31" stroke="#0a0a0c" stroke-width="0.8"/>
<rect x="1126.1" y="837.1" width="38.6" height="26.5" rx="3" fill="#1f1a31" stroke="#0a0a0c" stroke-width="0.8"/>
<rect x="1167.5" y="837.1" width="38.6" height="26.5" rx="3" fill="#1f1a31" stroke="#0a0a0c" stroke-width="0.8"/>
<rect x="1210.6" y="837.1" width="38.6" height="26.5" rx="3" fill="#1f1a31" stroke="#0a0a0c" stroke-width="0.8"/>
<rect x="1252.0" y="837.1" width="38.6" height="26.5" rx="3" fill="#1f1a31" stroke="#0a0a0c" stroke-width="0.8"/>
<rect x="615.2" y="837.1" width="124.8" height="26.5" rx="3" fill="#5f42d9"/>
<rect x="615.6" y="637.5" width="38" height="25.8" rx="3" fill="#1f1a31" stroke="#c8c8cc" stroke-width="1.5"/>
</svg>
<div class="a" style="left:309px;top:878.5px;width:994px;height:3.5px;background:#000"></div>
<!-- BOTTOM TOOLBAR -->
<div class="a" style="left:0;top:882px;width:1303px;height:54px;background:#212125"></div>

<div class="a" style="left:0;top:878.3px;width:1303px;height:4px;background:#000"></div>
<div class="a" style="left:9.9px;top:890.7px;width:41.1px;height:30.7px;border-radius:8px;background:#aeaeb2"></div>
<div class="a" style="left:586.8px;top:890.7px;width:41.7px;height:30.7px;border-radius:8px;background:#aeaeb2"></div>
<svg style="left:0;top:0" width="1303" height="936">
 <rect x="21.3" y="898.6" width="14.4" height="11.4" rx="2" fill="none" stroke="#000" stroke-width="1.4"/>
 <rect x="25" y="902" width="15" height="11.8" rx="1.5" fill="#000"/>
 <path d="M30.6 910.8 V904.8 L35.6 904 V909.8" fill="none" stroke="#aeaeb2" stroke-width="1"/><circle cx="29.8" cy="910.9" r="1.2" fill="#aeaeb2"/><circle cx="34.8" cy="910" r="1.2" fill="#aeaeb2"/>
 <rect x="67.2" y="899.2" width="14.6" height="6" rx="3" fill="none" stroke="#fff" stroke-width="1.3"/><circle cx="70.4" cy="902.2" r="1.6" fill="#fff"/>
 <rect x="66.8" y="907.4" width="15.2" height="6.3" rx="3.15" fill="#fff"/><circle cx="78.8" cy="910.55" r="1.7" fill="#212125"/>
 <rect x="112.2" y="898.4" width="12.6" height="16.2" rx="1.6" fill="none" stroke="#fff" stroke-width="1.4"/>
 <path d="M118.5 900 V913" stroke="#fff" stroke-width="1.1"/><ellipse cx="118.5" cy="905.7" rx="1.8" ry="3" fill="none" stroke="#fff" stroke-width="1.2"/>
 <path d="M602.2 911.8 L613.3 901.2" stroke="#000" stroke-width="1.9" stroke-linecap="round"/><circle cx="613.6" cy="900.9" r="0.8" fill="#000"/>
 <circle cx="651.3" cy="907.4" r="5.3" fill="none" stroke="#fff" stroke-width="1.4"/><path d="M651.3 902.4 V907" stroke="#fff" stroke-width="1.3"/>
 <circle cx="651.3" cy="898.6" r="0.9" fill="#fff"/><circle cx="645.2" cy="901.4" r="0.9" fill="#fff"/><circle cx="657.4" cy="901.4" r="0.9" fill="#fff"/><circle cx="642.7" cy="907.6" r="0.9" fill="#fff"/><circle cx="659.9" cy="907.6" r="0.9" fill="#fff"/><circle cx="645.2" cy="913.8" r="0.9" fill="#fff"/><circle cx="657.4" cy="913.8" r="0.9" fill="#fff"/>
 <path d="M688.7 899.3 V912.8 M695 899.3 V912.8 M700.9 899.3 V912.8" stroke="#fff" stroke-width="1.2"/>
 <rect x="687.3" y="904.5" width="2.8" height="5" rx="1.4" fill="#212125" stroke="#fff" stroke-width="1.1"/>
 <rect x="693.6" y="901" width="2.8" height="5" rx="1.4" fill="#212125" stroke="#fff" stroke-width="1.1"/>
 <rect x="699.5" y="904.5" width="2.8" height="5" rx="1.4" fill="#212125" stroke="#fff" stroke-width="1.1"/>
 <rect x="1263" y="898.8" width="18.8" height="15.2" rx="2.6" fill="#fff"/>
 <rect x="1266.6" y="898.8" width="1.9" height="8" fill="#212125"/><rect x="1271" y="898.8" width="1.9" height="8" fill="#212125"/><rect x="1275.3" y="898.8" width="1.9" height="8" fill="#212125"/>
 <path d="M1268.5 906.8 V914 M1272.9 906.8 V914 M1277.2 906.8 V914" stroke="#212125" stroke-width="0.8"/>
</svg>
<div class="a" style="left:0;top:935px;width:1303px;height:1px;background:#000"></div>
</body></html>
